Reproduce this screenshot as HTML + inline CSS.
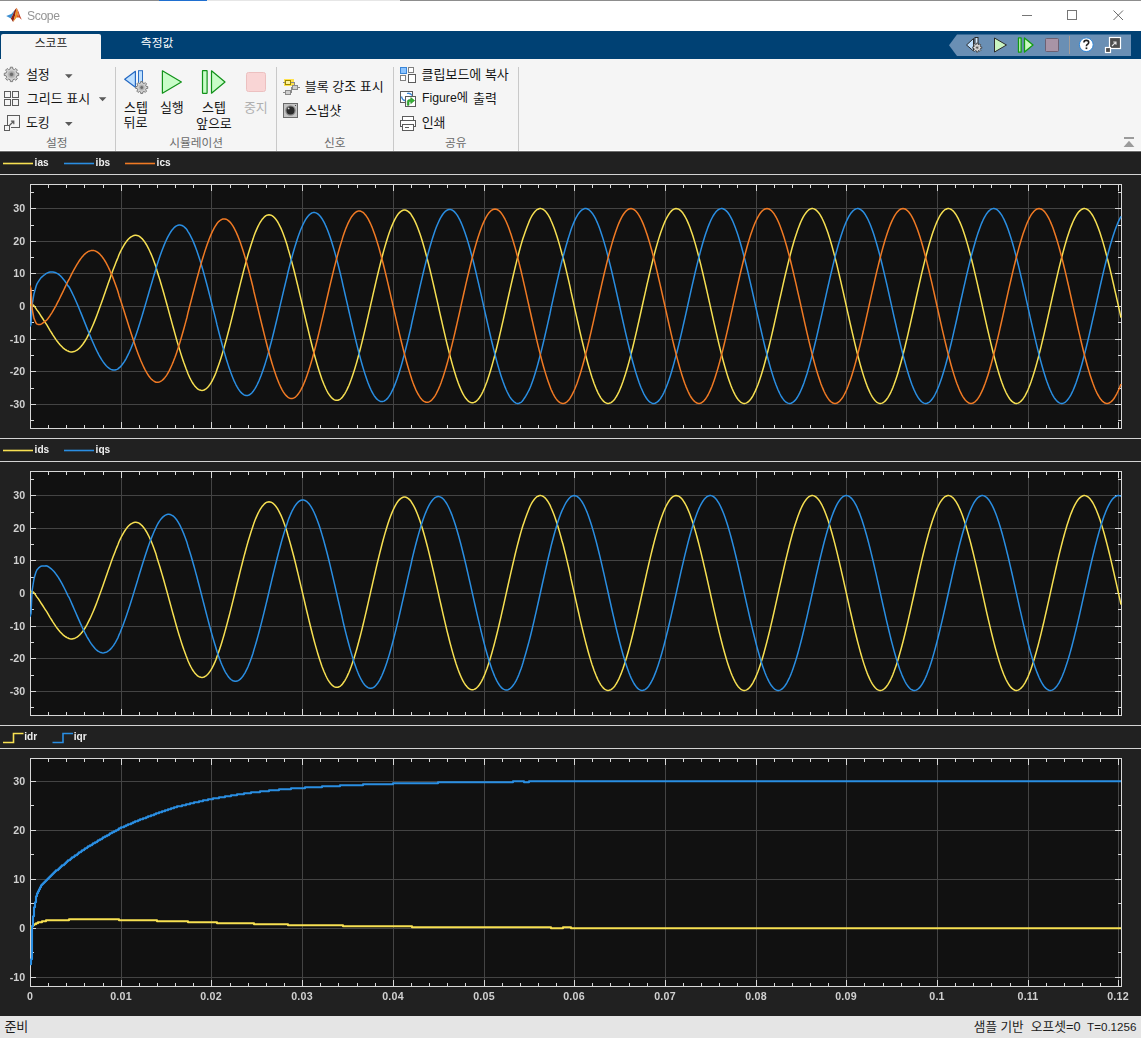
<!DOCTYPE html>
<html lang="ko"><head><meta charset="utf-8"><title>Scope</title>
<style>
html,body{margin:0;padding:0;}
body{width:1141px;height:1038px;overflow:hidden;position:relative;background:#212121;font-family:"Liberation Sans",sans-serif;}
#titlebar{position:absolute;left:0;top:0;width:1141px;height:31px;background:#fff;border-top:1px solid #8d8d8d;box-sizing:border-box;}
#titlebar .accent{position:absolute;left:159px;top:-1px;width:48px;height:1px;background:#1f6fd0;}
#title{will-change:transform;position:absolute;left:27px;top:7px;font-size:12.2px;line-height:16px;color:#959595;letter-spacing:-0.4px;}
#tabbar{position:absolute;left:0;top:31px;width:1141px;height:28px;background:#004174;}
#tab1{position:absolute;left:1px;top:3px;width:100px;height:25px;background:#f5f5f5;border-radius:2px 2px 0 0;}
#strip{position:absolute;left:0;top:59px;width:1141px;height:91px;background:#f5f5f5;border-bottom:1px solid #ffffff;}
.vsep{position:absolute;top:8px;width:1px;height:84px;background:#c9c9c9;z-index:2;}
.ko{position:absolute;display:block;white-space:nowrap;font-family:"Liberation Sans","Noto Sans CJK KR",sans-serif;}
.ic{position:absolute;display:block;overflow:visible;}
#edge{position:absolute;left:0;top:151px;width:1141px;height:1px;background:#6e6e6e;}
#status{position:absolute;left:0;top:1016px;width:1141px;height:22px;background:#e5e5e5;}
svg.plot{position:absolute;left:0;display:block;will-change:transform;}
svg.plot text{font-family:"Liberation Sans",sans-serif;font-weight:bold;font-size:10.67px;}
svg.plot text.leg{fill:#f0f0f0;font-size:10.1px;}
svg.plot text.tk{fill:#d0d0d0;}
</style></head>
<body>

<div id="titlebar"><div class="accent"></div><div class="accent" style="left:207px;width:193px;background:#e6e6e6"></div>
<svg class="ic" style="left:0;top:-1px" width="30" height="31" viewBox="0 0 30 31">
<path d="M6.2 16 L11.3 13.9 L14.6 10.2 L12.6 15.2 L10.9 18.6 Z" fill="#3d8fd1"/>
<path d="M10.9 18.6 L12.6 15.2 L14.6 10.2 L16.6 7.7 L15.2 15 L13.1 21.9 Z" fill="#8c2116"/>
<path d="M13.1 21.9 L15.2 15 L16.6 7.7 L18 12.4 L16.6 17.6 Z" fill="#ee8a1e"/>
<path d="M16.6 7.7 L18.4 11.2 L20.2 16.2 L21.8 19.8 L19.2 17.4 L18 12.4 Z" fill="#c43c1f"/>
<path d="M18 12.4 L19.2 17.4 L16.6 17.6 Z" fill="#d9551f"/>
</svg>
<div id="title">Scope</div>
<svg class="ic" style="left:1010px;top:-1px" width="131" height="31" viewBox="1010 0 131 31" shape-rendering="crispEdges">
<rect x="1022" y="15" width="10" height="1" fill="#767676"/>
<rect x="1067.5" y="10.5" width="9" height="9" fill="none" stroke="#767676" stroke-width="1"/>
<path d="M1113.5 10.5 L1123 20 M1123 10.5 L1113.5 20" stroke="#6a6a6a" stroke-width="1" fill="none" shape-rendering="geometricPrecision"/>
</svg>
</div>
<div id="tabbar"><div id="tab1"></div>
<svg class="ic" style="left:940px;top:0" width="201" height="28" viewBox="940 31 201 28">
<path d="M949 45.2 L957 34.5 H1131 V56 H957 Z" fill="#6a8fb4"/>
<!-- step back + gear -->
<path d="M966.5 45 L973.5 38.5 V51 Z" fill="#bfe0ff" stroke="#2a2a2a" stroke-width="1"/>
<rect x="975" y="37.5" width="3" height="9" fill="#d8ecff" stroke="#2a2a2a" stroke-width="1"/>
<radialGradient id="gg1"><stop offset="0" stop-color="#555555"/><stop offset="0.28" stop-color="#555555"/><stop offset="0.5" stop-color="#a6a6a6"/><stop offset="1" stop-color="#d0d0d0"/></radialGradient><path d="M981.74 46.88L981.74 48.32L980.41 48.37L980.01 49.32L980.92 50.30L979.90 51.32L978.92 50.41L977.97 50.81L977.92 52.14L976.48 52.14L976.43 50.81L975.48 50.41L974.50 51.32L973.48 50.30L974.39 49.32L973.99 48.37L972.66 48.32L972.66 46.88L973.99 46.83L974.39 45.88L973.48 44.90L974.50 43.88L975.48 44.79L976.43 44.39L976.48 43.06L977.92 43.06L977.97 44.39L978.92 44.79L979.90 43.88L980.92 44.90L980.01 45.88L980.41 46.83Z" fill="#e8e8e8" stroke="#3a3a3a" stroke-width="0.8" stroke-linejoin="round"/><circle cx="977.2" cy="47.6" r="2.3" fill="url(#gg1)"/>
<!-- play -->
<path d="M994.5 38 L1006.5 45 L994.5 52 Z" fill="#c9f4c0" stroke="#2b2b2b" stroke-width="1" stroke-linejoin="round"/>
<!-- step fwd -->
<rect x="1018.5" y="37.8" width="2.6" height="14.4" rx="0.3" fill="#c9f9c0" stroke="#129a12" stroke-width="1.3"/>
<path d="M1024.5 38 L1033 45 L1024.5 52 Z" fill="#c9f9c0" stroke="#129a12" stroke-width="1.3" stroke-linejoin="round"/>
<!-- stop -->
<rect x="1045.5" y="38.5" width="13" height="13" rx="1" fill="#a894a6" stroke="#6d6173" stroke-width="1"/>
<rect x="1069" y="36" width="1" height="18" fill="#a39c98"/>
<!-- help -->
<circle cx="1086.3" cy="44.7" r="6.9" fill="#ffffff" stroke="#2f86d6" stroke-width="1"/>
<path d="M1083.9 42.6 Q1083.9 40.4 1086.3 40.4 Q1088.7 40.4 1088.7 42.4 Q1088.7 43.6 1087.4 44.4 Q1086.4 45 1086.4 46.2" fill="none" stroke="#222" stroke-width="1.6"/>
<rect x="1085.6" y="47.4" width="1.7" height="1.7" fill="#222"/>
<!-- undock -->
<rect x="1109.5" y="37.5" width="11" height="11" fill="#4d4d4d" stroke="#ffffff" stroke-width="1.2"/>
<rect x="1105.5" y="47.5" width="5" height="5" fill="#4d4d4d" stroke="#ffffff" stroke-width="1.2"/>
<path d="M1112 46 L1115.6 42.4 M1113.2 42 H1116 V44.8" stroke="#e0e0e0" stroke-width="1.1" fill="none"/>
</svg>
<span class="ko" style="left:34.71px;top:7.41px;width:33.39px;height:10.58px;line-height:10.58px;font-size:11.8px;color:#222222">스코프</span>
<span class="ko" style="left:140.82px;top:6.45px;width:33.56px;height:12.70px;line-height:12.70px;font-size:11.8px;color:#ffffff">측정값</span>
</div>
<div id="strip">
<div class="vsep" style="left:115px"></div>
<div class="vsep" style="left:276px"></div>
<div class="vsep" style="left:393px"></div>
<div class="vsep" style="left:518px"></div>
<svg class="ic" style="left:0;top:0" width="115" height="91" viewBox="0 59 115 91">
<radialGradient id="gg2"><stop offset="0" stop-color="#6c6c6c"/><stop offset="0.28" stop-color="#6c6c6c"/><stop offset="0.5" stop-color="#a6a6a6"/><stop offset="1" stop-color="#cccccc"/></radialGradient><path d="M18.71 73.26L18.71 75.54L16.95 75.71L16.27 77.33L17.41 78.69L15.79 80.31L14.43 79.17L12.81 79.85L12.64 81.61L10.36 81.61L10.19 79.85L8.57 79.17L7.21 80.31L5.59 78.69L6.73 77.33L6.05 75.71L4.29 75.54L4.29 73.26L6.05 73.09L6.73 71.47L5.59 70.11L7.21 68.49L8.57 69.63L10.19 68.95L10.36 67.19L12.64 67.19L12.81 68.95L14.43 69.63L15.79 68.49L17.41 70.11L16.27 71.47L16.95 73.09Z" fill="#d4d4d4" stroke="#727272" stroke-width="0.9" stroke-linejoin="round"/><circle cx="11.5" cy="74.4" r="4.3" fill="url(#gg2)"/>
<g fill="none" stroke="#5c5c5c" stroke-width="1" shape-rendering="crispEdges">
<rect x="4.5" y="91.5" width="6" height="6"/><rect x="12.5" y="91.5" width="6" height="6"/>
<rect x="4.5" y="99.5" width="6" height="6"/><rect x="12.5" y="99.5" width="6" height="6"/>
</g>
<g fill="none" stroke="#5c5c5c" stroke-width="1">
<path d="M7.5 124.5 V115.5 H19.5 V127.5 H10.5" shape-rendering="crispEdges"/>
<rect x="4.5" y="125.5" width="5" height="5" shape-rendering="crispEdges"/>
<path d="M9.6 125.2 L13.5 121.5 M10.9 121.2 H13.8 V124.2" stroke-width="1.2"/>
</g>
<path d="M65 74.3 H72.6 L68.8 78.2 Z M98.8 97.3 H106.4 L102.6 101.2 Z M65 122 H72.6 L68.8 125.9 Z" fill="#5a5a5a"/>
</svg>
<span class="ko" style="left:25.91px;top:9.47px;width:23.68px;height:13.75px;line-height:13.75px;font-size:13px;color:#161616">설정</span>
<span class="ko" style="left:26.75px;top:32.91px;width:63.60px;height:13.78px;line-height:13.78px;font-size:13px;color:#161616">그리드 표시</span>
<span class="ko" style="left:25.92px;top:57.04px;width:23.66px;height:13.73px;line-height:13.73px;font-size:13px;color:#161616">도킹</span>
<span class="ko" style="left:45.94px;top:77.91px;width:21.52px;height:12.58px;line-height:12.58px;font-size:11.7px;color:#6a6a6a">설정</span>
<svg class="ic" style="left:116px;top:0" width="160" height="91" viewBox="116 59 160 91">
<path d="M124.7 79.3 L135.4 71.3 V87.3 Z" fill="#bfe0ff" stroke="#2468c2" stroke-width="1.2" stroke-linejoin="round"/>
<rect x="138.5" y="70.7" width="4" height="15" fill="#bfe0ff" stroke="#2d6fc4" stroke-width="1"/>
<radialGradient id="gg3"><stop offset="0" stop-color="#6c6c6c"/><stop offset="0.28" stop-color="#6c6c6c"/><stop offset="0.5" stop-color="#a6a6a6"/><stop offset="1" stop-color="#cccccc"/></radialGradient><path d="M147.72 86.55L147.72 88.45L146.17 88.57L145.62 89.90L146.64 91.09L145.29 92.44L144.10 91.42L142.77 91.97L142.65 93.52L140.75 93.52L140.63 91.97L139.30 91.42L138.11 92.44L136.76 91.09L137.78 89.90L137.23 88.57L135.68 88.45L135.68 86.55L137.23 86.43L137.78 85.10L136.76 83.91L138.11 82.56L139.30 83.58L140.63 83.03L140.75 81.48L142.65 81.48L142.77 83.03L144.10 83.58L145.29 82.56L146.64 83.91L145.62 85.10L146.17 86.43Z" fill="#d4d4d4" stroke="#727272" stroke-width="0.9" stroke-linejoin="round"/><circle cx="141.7" cy="87.5" r="3.4" fill="url(#gg3)"/>
<path d="M162.4 70.8 L181.4 82 L162.4 93.2 Z" fill="#c8fdc8" stroke="#12921a" stroke-width="1.2" stroke-linejoin="round"/>
<rect x="202.5" y="70.7" width="4.6" height="22.6" rx="0.2" fill="#c8fdc8" stroke="#12921a" stroke-width="1.2"/>
<path d="M211.5 70.8 L225 82 L211.5 93.2 Z" fill="#c8fdc8" stroke="#12921a" stroke-width="1.2" stroke-linejoin="round"/>
<rect x="246.5" y="72.5" width="19" height="19" rx="2" fill="#f9d5d5" stroke="#ecc0c0" stroke-width="1"/>
</svg>
<span class="ko" style="left:124.02px;top:41.65px;width:23.87px;height:13.61px;line-height:13.61px;font-size:13px;color:#161616">스텝</span>
<span class="ko" style="left:123.61px;top:57.47px;width:24.67px;height:13.75px;line-height:13.75px;font-size:13px;color:#161616">뒤로</span>
<span class="ko" style="left:159.92px;top:41.63px;width:23.85px;height:13.74px;line-height:13.74px;font-size:13px;color:#161616">실행</span>
<span class="ko" style="left:202.07px;top:41.65px;width:23.87px;height:13.61px;line-height:13.61px;font-size:13px;color:#161616">스텝</span>
<span class="ko" style="left:195.96px;top:57.57px;width:36.37px;height:13.57px;line-height:13.57px;font-size:13px;color:#161616">앞으로</span>
<span class="ko" style="left:243.91px;top:41.62px;width:23.58px;height:13.76px;line-height:13.76px;font-size:13px;color:#b0b0b0">중지</span>
<span class="ko" style="left:169.27px;top:77.65px;width:54.06px;height:12.60px;line-height:12.60px;font-size:11.7px;color:#6a6a6a">시뮬레이션</span>
<svg class="ic" style="left:277px;top:0" width="116" height="91" viewBox="277 59 116 91">
<g shape-rendering="crispEdges">
<rect x="284" y="79" width="10" height="7" fill="#ffe14d"/>
<rect x="285.5" y="80.5" width="5" height="4" fill="#fff3a0" stroke="#9a8600" stroke-width="1"/>
<rect x="292.5" y="85.5" width="5" height="4" fill="#cfcfcf" stroke="#8a8a8a" stroke-width="1"/>
<rect x="285.5" y="90.5" width="5" height="4" fill="#cfcfcf" stroke="#8a8a8a" stroke-width="1"/>
<path d="M283 82.5 H285 M291 82.5 H294.5 V85 M298 87.5 H299.5 M292 87.5 H291.5 V92.5 H291 M283 92.5 H285" fill="none" stroke="#8a8a8a" stroke-width="1"/>
</g>
<rect x="283.5" y="103.5" width="14" height="14" fill="#c4c4c4" stroke="#6a6a6a" stroke-width="1"/>
<circle cx="290.5" cy="110.5" r="5.3" fill="#8c8c8c"/>
<circle cx="290.5" cy="110.5" r="4" fill="#2b2b2b"/>
<circle cx="288.6" cy="108.4" r="0.9" fill="#dcdcdc"/>
<rect x="295" y="105" width="1" height="1" fill="#444"/>
</svg>
<span class="ko" style="left:304.80px;top:20.51px;width:79.80px;height:13.78px;line-height:13.78px;font-size:13px;color:#161616">블록 강조 표시</span>
<span class="ko" style="left:305.28px;top:44.64px;width:36.75px;height:13.71px;line-height:13.71px;font-size:13px;color:#161616">스냅샷</span>
<span class="ko" style="left:323.92px;top:77.68px;width:22.25px;height:12.34px;line-height:12.34px;font-size:11.7px;color:#6a6a6a">신호</span>
<svg class="ic" style="left:394px;top:0" width="124" height="91" viewBox="394 59 124 91">
<g shape-rendering="crispEdges" stroke="#5c5c5c" stroke-width="1">
<rect x="400.5" y="67.5" width="6" height="6" fill="#8cc4ff" stroke="#3a86d8"/>
<rect x="408.5" y="67.5" width="5" height="5" fill="#fff" stroke="#808080"/>
<rect x="400.5" y="75.5" width="5" height="5" fill="#fff" stroke="#808080"/>
<rect x="408.5" y="74.5" width="7" height="8" fill="#fff"/>
<rect x="400.5" y="91.5" width="12" height="11" fill="#fff"/>
<rect x="405.5" y="96.5" width="10" height="10" fill="#fff"/>
<path d="M402.5 116.500 H413.5 V120.5 H402.500 Z" fill="#fff"/>
<path d="M400.5 120.5 H415.5 V126.5 H400.500 Z" fill="#fff"/>
<path d="M402.5 124.5 H413.5 V130.5 H402.500 Z" fill="#fff"/>
<path d="M404.500 127.5 H408.500" fill="none"/>
</g>
<path d="M401.5 96.5 Q402.5 100.5 405 100.5 M407 93.5 Q410.5 92.5 412 95.5" fill="none" stroke="#3a86d8" stroke-width="1.3"/>
<path d="M407.3 105.3 V101.3 Q407.5 99.6 409.8 99.6 H410.8 V97.6 L414.6 100.6 L410.8 103.6 V101.6 H409.6 Q409 101.7 409 102.5 V105.3 Z" fill="#35b535" stroke="#1c7f1c" stroke-width="0.6"/>
</svg>
<span class="ko" style="left:421.50px;top:9.02px;width:89.45px;height:13.76px;line-height:13.76px;font-size:13px;color:#161616">클립보드에 복사</span>
<span class="ko" style="left:421.90px;top:32.03px;width:46.60px;height:15.13px;line-height:15.13px;font-size:12.3px;color:#161616">Figure에</span>
<span class="ko" style="left:473.04px;top:32.73px;width:23.62px;height:13.84px;line-height:13.84px;font-size:13px;color:#161616">출력</span>
<span class="ko" style="left:421.66px;top:57.02px;width:23.58px;height:13.76px;line-height:13.76px;font-size:13px;color:#161616">인쇄</span>
<span class="ko" style="left:445.08px;top:77.79px;width:22.33px;height:12.17px;line-height:12.17px;font-size:11.7px;color:#6a6a6a">공유</span>
<svg class="ic" style="left:1120px;top:75px" width="18" height="16" viewBox="1120 134 18 16">
<rect x="1124" y="137" width="10" height="2" fill="#9b9b9b"/><path d="M1123.6 147 L1129 140.8 L1134.4 147 Z" fill="#9b9b9b"/></svg>
</div>
<div id="edge"></div>
<svg class="plot" style="top:151px" width="1141" height="287" viewBox="0 151 1141 287">
<rect x="0" y="174" width="1141" height="1" fill="#d4d4d4"/>
<rect x="30" y="184" width="1092" height="245" fill="#111111"/>
<g shape-rendering="crispEdges" fill="#444444">
<rect x="121" y="184" width="1" height="244"/>
<rect x="211" y="184" width="1" height="244"/>
<rect x="302" y="184" width="1" height="244"/>
<rect x="393" y="184" width="1" height="244"/>
<rect x="484" y="184" width="1" height="244"/>
<rect x="574" y="184" width="1" height="244"/>
<rect x="665" y="184" width="1" height="244"/>
<rect x="756" y="184" width="1" height="244"/>
<rect x="846" y="184" width="1" height="244"/>
<rect x="937" y="184" width="1" height="244"/>
<rect x="1028" y="184" width="1" height="244"/>
<rect x="1118" y="184" width="1" height="244"/>
<rect x="30" y="404" width="1091" height="1"/>
<rect x="30" y="371" width="1091" height="1"/>
<rect x="30" y="339" width="1091" height="1"/>
<rect x="30" y="306" width="1091" height="1"/>
<rect x="30" y="273" width="1091" height="1"/>
<rect x="30" y="241" width="1091" height="1"/>
<rect x="30" y="208" width="1091" height="1"/>
</g>
<g shape-rendering="crispEdges" fill="#d8d8d8">
<rect x="30" y="184" width="1092" height="1"/>
<rect x="30" y="428" width="1092" height="1"/>
<rect x="30" y="184" width="1" height="245"/>
<rect x="1121" y="184" width="1" height="245"/>
<rect x="30" y="404" width="6" height="1"/>
<rect x="1115" y="404" width="7" height="1"/>
<rect x="30" y="371" width="6" height="1"/>
<rect x="1115" y="371" width="7" height="1"/>
<rect x="30" y="339" width="6" height="1"/>
<rect x="1115" y="339" width="7" height="1"/>
<rect x="30" y="306" width="6" height="1"/>
<rect x="1115" y="306" width="7" height="1"/>
<rect x="30" y="273" width="6" height="1"/>
<rect x="1115" y="273" width="7" height="1"/>
<rect x="30" y="241" width="6" height="1"/>
<rect x="1115" y="241" width="7" height="1"/>
<rect x="30" y="208" width="6" height="1"/>
<rect x="1115" y="208" width="7" height="1"/>
<rect x="30" y="420" width="4" height="1"/>
<rect x="1118" y="420" width="4" height="1"/>
<rect x="30" y="388" width="4" height="1"/>
<rect x="1118" y="388" width="4" height="1"/>
<rect x="30" y="355" width="4" height="1"/>
<rect x="1118" y="355" width="4" height="1"/>
<rect x="30" y="322" width="4" height="1"/>
<rect x="1118" y="322" width="4" height="1"/>
<rect x="30" y="290" width="4" height="1"/>
<rect x="1118" y="290" width="4" height="1"/>
<rect x="30" y="257" width="4" height="1"/>
<rect x="1118" y="257" width="4" height="1"/>
<rect x="30" y="225" width="4" height="1"/>
<rect x="1118" y="225" width="4" height="1"/>
<rect x="30" y="192" width="4" height="1"/>
<rect x="1118" y="192" width="4" height="1"/>
<rect x="30" y="184" width="1" height="7"/>
<rect x="30" y="422" width="1" height="7"/>
<rect x="48" y="184" width="1" height="4"/>
<rect x="48" y="425" width="1" height="4"/>
<rect x="66" y="184" width="1" height="4"/>
<rect x="66" y="425" width="1" height="4"/>
<rect x="84" y="184" width="1" height="4"/>
<rect x="84" y="425" width="1" height="4"/>
<rect x="103" y="184" width="1" height="4"/>
<rect x="103" y="425" width="1" height="4"/>
<rect x="121" y="184" width="1" height="7"/>
<rect x="121" y="422" width="1" height="7"/>
<rect x="139" y="184" width="1" height="4"/>
<rect x="139" y="425" width="1" height="4"/>
<rect x="157" y="184" width="1" height="4"/>
<rect x="157" y="425" width="1" height="4"/>
<rect x="175" y="184" width="1" height="4"/>
<rect x="175" y="425" width="1" height="4"/>
<rect x="193" y="184" width="1" height="4"/>
<rect x="193" y="425" width="1" height="4"/>
<rect x="211" y="184" width="1" height="7"/>
<rect x="211" y="422" width="1" height="7"/>
<rect x="230" y="184" width="1" height="4"/>
<rect x="230" y="425" width="1" height="4"/>
<rect x="248" y="184" width="1" height="4"/>
<rect x="248" y="425" width="1" height="4"/>
<rect x="266" y="184" width="1" height="4"/>
<rect x="266" y="425" width="1" height="4"/>
<rect x="284" y="184" width="1" height="4"/>
<rect x="284" y="425" width="1" height="4"/>
<rect x="302" y="184" width="1" height="7"/>
<rect x="302" y="422" width="1" height="7"/>
<rect x="320" y="184" width="1" height="4"/>
<rect x="320" y="425" width="1" height="4"/>
<rect x="338" y="184" width="1" height="4"/>
<rect x="338" y="425" width="1" height="4"/>
<rect x="357" y="184" width="1" height="4"/>
<rect x="357" y="425" width="1" height="4"/>
<rect x="375" y="184" width="1" height="4"/>
<rect x="375" y="425" width="1" height="4"/>
<rect x="393" y="184" width="1" height="7"/>
<rect x="393" y="422" width="1" height="7"/>
<rect x="411" y="184" width="1" height="4"/>
<rect x="411" y="425" width="1" height="4"/>
<rect x="429" y="184" width="1" height="4"/>
<rect x="429" y="425" width="1" height="4"/>
<rect x="447" y="184" width="1" height="4"/>
<rect x="447" y="425" width="1" height="4"/>
<rect x="465" y="184" width="1" height="4"/>
<rect x="465" y="425" width="1" height="4"/>
<rect x="484" y="184" width="1" height="7"/>
<rect x="484" y="422" width="1" height="7"/>
<rect x="502" y="184" width="1" height="4"/>
<rect x="502" y="425" width="1" height="4"/>
<rect x="520" y="184" width="1" height="4"/>
<rect x="520" y="425" width="1" height="4"/>
<rect x="538" y="184" width="1" height="4"/>
<rect x="538" y="425" width="1" height="4"/>
<rect x="556" y="184" width="1" height="4"/>
<rect x="556" y="425" width="1" height="4"/>
<rect x="574" y="184" width="1" height="7"/>
<rect x="574" y="422" width="1" height="7"/>
<rect x="592" y="184" width="1" height="4"/>
<rect x="592" y="425" width="1" height="4"/>
<rect x="610" y="184" width="1" height="4"/>
<rect x="610" y="425" width="1" height="4"/>
<rect x="629" y="184" width="1" height="4"/>
<rect x="629" y="425" width="1" height="4"/>
<rect x="647" y="184" width="1" height="4"/>
<rect x="647" y="425" width="1" height="4"/>
<rect x="665" y="184" width="1" height="7"/>
<rect x="665" y="422" width="1" height="7"/>
<rect x="683" y="184" width="1" height="4"/>
<rect x="683" y="425" width="1" height="4"/>
<rect x="701" y="184" width="1" height="4"/>
<rect x="701" y="425" width="1" height="4"/>
<rect x="719" y="184" width="1" height="4"/>
<rect x="719" y="425" width="1" height="4"/>
<rect x="737" y="184" width="1" height="4"/>
<rect x="737" y="425" width="1" height="4"/>
<rect x="756" y="184" width="1" height="7"/>
<rect x="756" y="422" width="1" height="7"/>
<rect x="774" y="184" width="1" height="4"/>
<rect x="774" y="425" width="1" height="4"/>
<rect x="792" y="184" width="1" height="4"/>
<rect x="792" y="425" width="1" height="4"/>
<rect x="810" y="184" width="1" height="4"/>
<rect x="810" y="425" width="1" height="4"/>
<rect x="828" y="184" width="1" height="4"/>
<rect x="828" y="425" width="1" height="4"/>
<rect x="846" y="184" width="1" height="7"/>
<rect x="846" y="422" width="1" height="7"/>
<rect x="864" y="184" width="1" height="4"/>
<rect x="864" y="425" width="1" height="4"/>
<rect x="883" y="184" width="1" height="4"/>
<rect x="883" y="425" width="1" height="4"/>
<rect x="901" y="184" width="1" height="4"/>
<rect x="901" y="425" width="1" height="4"/>
<rect x="919" y="184" width="1" height="4"/>
<rect x="919" y="425" width="1" height="4"/>
<rect x="937" y="184" width="1" height="7"/>
<rect x="937" y="422" width="1" height="7"/>
<rect x="955" y="184" width="1" height="4"/>
<rect x="955" y="425" width="1" height="4"/>
<rect x="973" y="184" width="1" height="4"/>
<rect x="973" y="425" width="1" height="4"/>
<rect x="991" y="184" width="1" height="4"/>
<rect x="991" y="425" width="1" height="4"/>
<rect x="1010" y="184" width="1" height="4"/>
<rect x="1010" y="425" width="1" height="4"/>
<rect x="1028" y="184" width="1" height="7"/>
<rect x="1028" y="422" width="1" height="7"/>
<rect x="1046" y="184" width="1" height="4"/>
<rect x="1046" y="425" width="1" height="4"/>
<rect x="1064" y="184" width="1" height="4"/>
<rect x="1064" y="425" width="1" height="4"/>
<rect x="1082" y="184" width="1" height="4"/>
<rect x="1082" y="425" width="1" height="4"/>
<rect x="1100" y="184" width="1" height="4"/>
<rect x="1100" y="425" width="1" height="4"/>
<rect x="1118" y="184" width="1" height="7"/>
<rect x="1118" y="422" width="1" height="7"/>
</g>
<clipPath id="cp0"><rect x="30" y="184" width="1092" height="245"/></clipPath>
<g clip-path="url(#cp0)" fill="none" stroke-linejoin="round" stroke-linecap="butt">
<path stroke="#f7e052" stroke-width="1.5" d="M30.0 306.0L31.0 304.3L32.0 304.7L33.0 304.9L34.0 305.9L35.0 307.1L36.0 308.6L37.0 310.1L38.0 311.4L39.0 312.8L40.0 314.4L41.0 316.0L42.0 317.5L43.0 319.0L44.0 320.6L45.0 322.2L46.0 323.6L47.0 325.2L48.0 326.9L49.0 328.6L50.0 330.3L51.0 331.9L52.0 333.5L53.0 335.1L54.0 336.6L55.0 338.1L56.0 339.6L57.0 341.0L58.0 342.3L59.0 343.6L60.0 344.8L61.0 345.8L62.0 346.8L63.0 347.8L64.0 348.6L65.0 349.4L66.0 350.0L67.0 350.6L68.0 351.0L69.0 351.5L70.0 351.8L71.0 352.0L72.0 352.0L73.0 351.8L74.0 351.6L75.0 351.2L76.0 350.7L77.0 350.1L78.0 349.4L79.0 348.5L80.0 347.6L81.0 346.5L82.0 345.3L83.0 344.0L84.0 342.5L85.0 341.0L86.0 339.3L87.0 337.6L88.0 335.7L89.0 333.7L90.0 331.7L91.0 329.5L92.0 327.3L93.0 325.0L94.0 322.6L95.0 320.1L96.0 317.6L97.0 315.0L98.0 312.3L99.0 309.6L100.0 306.8L101.0 304.1L102.0 301.2L103.0 298.4L104.0 295.5L105.0 292.7L106.0 289.8L107.0 286.9L108.0 284.1L109.0 281.2L110.0 278.4L111.0 275.6L112.0 272.8L113.0 270.1L114.0 267.5L115.0 264.9L116.0 262.3L117.0 259.9L118.0 257.5L119.0 254.8L120.0 252.6L121.0 250.5L122.0 248.6L123.0 246.8L124.0 245.1L125.0 243.5L126.0 242.1L127.0 240.8L128.0 239.6L129.0 238.5L130.0 237.6L131.0 236.9L132.0 236.3L133.0 235.8L134.0 235.5L135.0 235.3L136.0 235.3L137.0 235.4L138.0 235.7L139.0 236.2L140.0 236.9L141.0 237.7L142.0 238.6L143.0 239.8L144.0 241.0L145.0 242.4L146.0 244.0L147.0 245.7L148.0 247.6L149.0 249.5L150.0 251.7L151.0 253.9L152.0 256.3L153.0 258.8L154.0 261.5L155.0 264.2L156.0 267.1L157.0 270.8L158.0 273.9L159.0 277.1L160.0 280.3L161.0 283.7L162.0 287.1L163.0 290.5L164.0 294.0L165.0 297.6L166.0 301.2L167.0 304.8L168.0 308.4L169.0 312.1L170.0 315.8L171.0 319.4L172.0 323.1L173.0 326.7L174.0 330.3L175.0 333.9L176.0 337.5L177.0 341.0L178.0 344.4L179.0 347.7L180.0 350.9L181.0 354.1L182.0 357.2L183.0 360.2L184.0 363.1L185.0 365.8L186.0 368.5L187.0 371.0L188.0 373.8L189.0 376.0L190.0 378.1L191.0 380.0L192.0 381.8L193.0 383.5L194.0 384.9L195.0 386.2L196.0 387.3L197.0 388.3L198.0 389.1L199.0 389.7L200.0 390.1L201.0 390.3L202.0 390.4L203.0 390.3L204.0 390.0L205.0 389.5L206.0 388.8L207.0 388.0L208.0 387.0L209.0 385.8L210.0 384.4L211.0 382.9L212.0 381.1L213.0 379.2L214.0 377.1L215.0 374.9L216.0 372.5L217.0 369.5L218.0 366.8L219.0 364.0L220.0 361.0L221.0 357.9L222.0 354.7L223.0 351.4L224.0 348.0L225.0 344.4L226.0 340.8L227.0 337.1L228.0 333.3L229.0 329.5L230.0 325.6L231.0 321.6L232.0 317.6L233.0 313.6L234.0 309.6L235.0 305.5L236.0 301.4L237.0 297.3L238.0 293.2L239.0 289.2L240.0 285.1L241.0 281.1L242.0 277.2L243.0 273.3L244.0 269.4L245.0 265.7L246.0 262.0L247.0 258.4L248.0 254.8L249.0 251.5L250.0 248.2L251.0 245.0L252.0 242.0L253.0 239.1L254.0 235.9L255.0 233.3L256.0 230.9L257.0 228.6L258.0 226.4L259.0 224.5L260.0 222.7L261.0 221.1L262.0 219.6L263.0 218.4L264.0 217.3L265.0 216.4L266.0 215.7L267.0 215.2L268.0 214.9L269.0 214.8L270.0 214.9L271.0 215.2L272.0 215.7L273.0 216.3L274.0 217.2L275.0 218.3L276.0 219.5L277.0 220.9L278.0 222.5L279.0 224.3L280.0 226.3L281.0 228.4L282.0 230.8L283.0 233.2L284.0 235.9L285.0 238.7L286.0 241.7L287.0 244.7L288.0 248.5L289.0 251.9L290.0 255.4L291.0 259.0L292.0 262.7L293.0 266.5L294.0 270.3L295.0 274.3L296.0 278.4L297.0 282.5L298.0 286.6L299.0 290.8L300.0 295.1L301.0 299.3L302.0 303.6L303.0 307.9L304.0 312.2L305.0 316.5L306.0 320.8L307.0 325.0L308.0 329.2L309.0 333.4L310.0 337.5L311.0 341.5L312.0 345.5L313.0 349.4L314.0 353.2L315.0 356.9L316.0 360.4L317.0 363.9L318.0 367.3L319.0 370.5L320.0 373.6L321.0 376.6L322.0 379.4L323.0 382.0L324.0 384.5L325.0 386.8L326.0 389.0L327.0 391.0L328.0 392.8L329.0 394.4L330.0 395.8L331.0 397.0L332.0 398.1L333.0 398.9L334.0 399.6L335.0 400.0L336.0 400.3L337.0 400.3L338.0 400.2L339.0 399.8L340.0 399.3L341.0 398.5L342.0 397.6L343.0 396.2L344.0 394.8L345.0 393.3L346.0 391.5L347.0 389.6L348.0 387.4L349.0 385.2L350.0 382.7L351.0 380.1L352.0 377.3L353.0 374.3L354.0 371.2L355.0 368.0L356.0 364.6L357.0 361.2L358.0 357.5L359.0 353.8L360.0 350.0L361.0 346.1L362.0 342.1L363.0 338.0L364.0 333.8L365.0 329.6L366.0 325.3L367.0 321.0L368.0 316.6L369.0 312.2L370.0 307.8L371.0 303.4L372.0 299.1L373.0 294.7L374.0 290.3L375.0 286.0L376.0 281.7L377.0 277.4L378.0 273.3L379.0 269.1L380.0 265.1L381.0 261.2L382.0 257.3L383.0 253.5L384.0 249.9L385.0 246.4L386.0 243.0L387.0 239.7L388.0 236.6L389.0 233.6L390.0 230.8L391.0 228.1L392.0 225.6L393.0 223.3L394.0 221.1L395.0 219.1L396.0 217.3L397.0 215.7L398.0 214.3L399.0 213.1L400.0 212.1L401.0 211.3L402.0 210.7L403.0 210.3L404.0 210.1L405.0 210.1L406.0 210.3L407.0 210.7L408.0 211.3L409.0 212.1L410.0 213.1L411.0 214.3L412.0 216.0L413.0 217.6L414.0 219.4L415.0 221.4L416.0 223.6L417.0 226.0L418.0 228.5L419.0 231.2L420.0 234.1L421.0 237.1L422.0 240.2L423.0 243.5L424.0 247.0L425.0 250.5L426.0 254.2L427.0 258.0L428.0 261.9L429.0 265.9L430.0 270.0L431.0 274.2L432.0 278.4L433.0 282.7L434.0 287.0L435.0 291.4L436.0 295.8L437.0 300.2L438.0 304.7L439.0 309.1L440.0 313.6L441.0 318.0L442.0 322.4L443.0 326.8L444.0 331.1L445.0 335.4L446.0 339.6L447.0 343.8L448.0 347.8L449.0 351.8L450.0 355.7L451.0 359.4L452.0 363.1L453.0 366.6L454.0 370.1L455.0 373.3L456.0 376.5L457.0 379.4L458.0 382.3L459.0 384.9L460.0 387.4L461.0 389.7L462.0 391.9L463.0 393.9L464.0 395.6L465.0 397.2L466.0 398.6L467.0 399.8L468.0 400.8L469.0 401.6L470.0 402.2L471.0 402.5L472.0 402.7L473.0 402.7L474.0 402.4L475.0 402.0L476.0 401.4L477.0 400.5L478.0 399.5L479.0 398.2L480.0 396.8L481.0 395.1L482.0 393.3L483.0 391.3L484.0 389.1L485.0 386.7L486.0 384.1L487.0 381.4L488.0 378.5L489.0 375.5L490.0 372.3L491.0 369.0L492.0 365.5L493.0 361.9L494.0 358.2L495.0 354.4L496.0 350.5L497.0 346.5L498.0 342.3L499.0 338.2L500.0 333.9L501.0 329.6L502.0 325.2L503.0 320.8L504.0 316.4L505.0 311.9L506.0 307.4L507.0 303.0L508.0 298.5L509.0 294.0L510.0 289.6L511.0 285.2L512.0 280.8L513.0 276.5L514.0 272.3L515.0 268.0L516.0 263.9L517.0 259.9L518.0 256.0L519.0 252.2L520.0 248.5L521.0 244.9L522.0 241.5L523.0 238.3L524.0 235.4L525.0 232.5L526.0 229.7L527.0 227.0L528.0 224.5L529.0 221.9L530.0 219.5L531.0 217.5L532.0 215.7L533.0 214.1L534.0 212.7L535.0 211.5L536.0 210.5L537.0 209.7L538.0 209.2L539.0 208.8L540.0 208.6L541.0 208.6L542.0 208.9L543.0 209.3L544.0 210.0L545.0 210.8L546.0 211.9L547.0 213.2L548.0 214.6L549.0 216.3L550.0 218.1L551.0 220.5L552.0 222.7L553.0 225.2L554.0 227.7L555.0 230.5L556.0 233.4L557.0 236.5L558.0 239.7L559.0 243.1L560.0 246.6L561.0 250.2L562.0 254.0L563.0 257.3L564.0 261.2L565.0 265.3L566.0 269.4L567.0 273.6L568.0 277.9L569.0 282.2L570.0 286.6L571.0 291.7L572.0 296.1L573.0 300.6L574.0 305.1L575.0 309.6L576.0 314.1L577.0 318.6L578.0 323.0L579.0 327.4L580.0 331.8L581.0 336.1L582.0 340.3L583.0 344.5L584.0 348.6L585.0 352.6L586.0 356.5L587.0 360.3L588.0 364.0L589.0 367.5L590.0 370.9L591.0 374.2L592.0 377.4L593.0 380.3L594.0 383.2L595.0 385.8L596.0 388.3L597.0 390.6L598.0 392.8L599.0 394.7L600.0 396.5L601.0 398.1L602.0 399.4L603.0 400.6L604.0 401.6L605.0 402.3L606.0 402.9L607.0 403.3L608.0 403.4L609.0 403.3L610.0 403.1L611.0 402.6L612.0 401.9L613.0 401.0L614.0 400.0L615.0 398.7L616.0 397.2L617.0 395.5L618.0 393.6L619.0 391.6L620.0 389.3L621.0 386.9L622.0 384.3L623.0 381.6L624.0 378.6L625.0 375.6L626.0 372.3L627.0 369.0L628.0 365.5L629.0 361.9L630.0 358.1L631.0 354.3L632.0 350.3L633.0 346.3L634.0 342.1L635.0 337.9L636.0 333.6L637.0 329.3L638.0 324.9L639.0 320.5L640.0 316.0L641.0 311.5L642.0 307.0L643.0 302.5L644.0 298.0L645.0 293.6L646.0 289.1L647.0 284.7L648.0 280.3L649.0 276.0L650.0 271.8L651.0 267.6L652.0 263.5L653.0 259.5L654.0 255.6L655.0 251.8L656.0 248.1L657.0 244.6L658.0 241.1L659.0 237.9L660.0 234.7L661.0 231.7L662.0 228.9L663.0 226.2L664.0 223.7L665.0 221.4L666.0 219.3L667.0 217.3L668.0 215.6L669.0 214.0L670.0 212.6L671.0 211.4L672.0 210.4L673.0 209.7L674.0 209.1L675.0 208.7L676.0 208.6L677.0 208.7L678.0 208.9L679.0 209.4L680.0 210.1L681.0 210.9L682.0 212.0L683.0 213.3L684.0 214.8L685.0 216.5L686.0 218.3L687.0 220.4L688.0 222.6L689.0 225.0L690.0 227.6L691.0 230.4L692.0 233.3L693.0 236.3L694.0 239.6L695.0 242.9L696.0 246.4L697.0 250.0L698.0 253.8L699.0 257.6L700.0 261.6L701.0 265.6L702.0 269.8L703.0 274.0L704.0 278.3L705.0 282.6L706.0 287.0L707.0 291.4L708.0 295.9L709.0 300.4L710.0 304.9L711.0 309.4L712.0 313.9L713.0 318.3L714.0 322.8L715.0 327.2L716.0 331.6L717.0 335.9L718.0 340.1L719.0 344.3L720.0 348.4L721.0 352.4L722.0 356.3L723.0 360.1L724.0 363.8L725.0 367.3L726.0 370.8L727.0 374.1L728.0 377.2L729.0 380.2L730.0 383.0L731.0 385.7L732.0 388.2L733.0 390.5L734.0 392.7L735.0 394.6L736.0 396.4L737.0 398.0L738.0 399.4L739.0 400.5L740.0 401.5L741.0 402.3L742.0 402.9L743.0 403.2L744.0 403.4L745.0 403.4L746.0 403.1L747.0 402.6L748.0 402.0L749.0 401.1L750.0 400.0L751.0 398.7L752.0 397.3L753.0 395.6L754.0 393.7L755.0 391.7L756.0 389.4L757.0 387.0L758.0 384.5L759.0 381.7L760.0 378.8L761.0 375.7L762.0 372.5L763.0 369.2L764.0 365.7L765.0 362.0L766.0 358.3L767.0 354.5L768.0 350.5L769.0 346.5L770.0 342.3L771.0 338.1L772.0 333.8L773.0 329.5L774.0 325.1L775.0 320.7L776.0 316.2L777.0 311.7L778.0 307.2L779.0 302.7L780.0 298.2L781.0 293.8L782.0 289.3L783.0 284.9L784.0 280.5L785.0 276.2L786.0 272.0L787.0 267.8L788.0 263.7L789.0 259.7L790.0 255.8L791.0 252.0L792.0 248.3L793.0 244.7L794.0 241.3L795.0 238.0L796.0 234.9L797.0 231.9L798.0 229.0L799.0 226.4L800.0 223.9L801.0 221.5L802.0 219.4L803.0 217.4L804.0 215.6L805.0 214.1L806.0 212.7L807.0 211.5L808.0 210.5L809.0 209.7L810.0 209.1L811.0 208.8L812.0 208.6L813.0 208.6L814.0 208.9L815.0 209.4L816.0 210.0L817.0 210.9L818.0 212.0L819.0 213.2L820.0 214.7L821.0 216.4L822.0 218.2L823.0 220.3L824.0 222.5L825.0 224.9L826.0 227.5L827.0 230.2L828.0 233.1L829.0 236.2L830.0 239.4L831.0 242.8L832.0 246.2L833.0 249.9L834.0 253.6L835.0 257.4L836.0 261.4L837.0 265.4L838.0 269.6L839.0 273.8L840.0 278.1L841.0 282.4L842.0 286.8L843.0 291.2L844.0 295.7L845.0 300.2L846.0 304.7L847.0 309.1L848.0 313.6L849.0 318.1L850.0 322.6L851.0 327.0L852.0 331.3L853.0 335.7L854.0 339.9L855.0 344.1L856.0 348.2L857.0 352.2L858.0 356.1L859.0 359.9L860.0 363.6L861.0 367.2L862.0 370.6L863.0 373.9L864.0 377.1L865.0 380.1L866.0 382.9L867.0 385.6L868.0 388.1L869.0 390.4L870.0 392.6L871.0 394.5L872.0 396.3L873.0 397.9L874.0 399.3L875.0 400.5L876.0 401.5L877.0 402.3L878.0 402.9L879.0 403.2L880.0 403.4L881.0 403.4L882.0 403.1L883.0 402.7L884.0 402.0L885.0 401.1L886.0 400.1L887.0 398.8L888.0 397.3L889.0 395.7L890.0 393.8L891.0 391.8L892.0 389.6L893.0 387.2L894.0 384.6L895.0 381.8L896.0 378.9L897.0 375.9L898.0 372.7L899.0 369.3L900.0 365.8L901.0 362.2L902.0 358.5L903.0 354.7L904.0 350.7L905.0 346.7L906.0 342.5L907.0 338.3L908.0 334.1L909.0 329.7L910.0 325.3L911.0 320.9L912.0 316.4L913.0 312.0L914.0 307.5L915.0 303.0L916.0 298.5L917.0 294.0L918.0 289.5L919.0 285.1L920.0 280.8L921.0 276.4L922.0 272.2L923.0 268.0L924.0 263.9L925.0 259.9L926.0 256.0L927.0 252.2L928.0 248.5L929.0 244.9L930.0 241.5L931.0 238.2L932.0 235.0L933.0 232.0L934.0 229.2L935.0 226.5L936.0 224.0L937.0 221.6L938.0 219.5L939.0 217.5L940.0 215.7L941.0 214.1L942.0 212.7L943.0 211.5L944.0 210.5L945.0 209.7L946.0 209.2L947.0 208.8L948.0 208.6L949.0 208.6L950.0 208.9L951.0 209.3L952.0 210.0L953.0 210.8L954.0 211.9L955.0 213.2L956.0 214.6L957.0 216.3L958.0 218.1L959.0 220.2L960.0 222.4L961.0 224.8L962.0 227.3L963.0 230.1L964.0 233.0L965.0 236.0L966.0 239.2L967.0 242.6L968.0 246.1L969.0 249.7L970.0 253.4L971.0 257.2L972.0 261.2L973.0 265.2L974.0 269.4L975.0 273.6L976.0 277.8L977.0 282.2L978.0 286.6L979.0 291.0L980.0 295.4L981.0 299.9L982.0 304.4L983.0 308.9L984.0 313.4L985.0 317.9L986.0 322.3L987.0 326.8L988.0 331.1L989.0 335.4L990.0 339.7L991.0 343.9L992.0 348.0L993.0 352.0L994.0 355.9L995.0 359.7L996.0 363.4L997.0 367.0L998.0 370.4L999.0 373.7L1000.0 376.9L1001.0 379.9L1002.0 382.8L1003.0 385.4L1004.0 388.0L1005.0 390.3L1006.0 392.5L1007.0 394.4L1008.0 396.2L1009.0 397.8L1010.0 399.2L1011.0 400.4L1012.0 401.4L1013.0 402.2L1014.0 402.8L1015.0 403.2L1016.0 403.4L1017.0 403.4L1018.0 403.1L1019.0 402.7L1020.0 402.0L1021.0 401.2L1022.0 400.1L1023.0 398.9L1024.0 397.4L1025.0 395.8L1026.0 393.9L1027.0 391.9L1028.0 389.7L1029.0 387.3L1030.0 384.7L1031.0 382.0L1032.0 379.1L1033.0 376.0L1034.0 372.8L1035.0 369.5L1036.0 366.0L1037.0 362.4L1038.0 358.7L1039.0 354.9L1040.0 350.9L1041.0 346.9L1042.0 342.7L1043.0 338.5L1044.0 334.3L1045.0 329.9L1046.0 325.5L1047.0 321.1L1048.0 316.7L1049.0 312.2L1050.0 307.7L1051.0 303.2L1052.0 298.7L1053.0 294.2L1054.0 289.8L1055.0 285.4L1056.0 281.0L1057.0 276.7L1058.0 272.4L1059.0 268.2L1060.0 264.1L1061.0 260.1L1062.0 256.2L1063.0 252.4L1064.0 248.7L1065.0 245.1L1066.0 241.7L1067.0 238.3L1068.0 235.2L1069.0 232.2L1070.0 229.3L1071.0 226.6L1072.0 224.1L1073.0 221.8L1074.0 219.6L1075.0 217.6L1076.0 215.8L1077.0 214.2L1078.0 212.8L1079.0 211.6L1080.0 210.6L1081.0 209.8L1082.0 209.2L1083.0 208.8L1084.0 208.6L1085.0 208.6L1086.0 208.9L1087.0 209.3L1088.0 209.9L1089.0 210.8L1090.0 211.8L1091.0 213.1L1092.0 214.5L1093.0 216.2L1094.0 218.0L1095.0 220.1L1096.0 222.3L1097.0 224.7L1098.0 227.2L1099.0 229.9L1100.0 232.8L1101.0 235.9L1102.0 239.1L1103.0 242.4L1104.0 245.9L1105.0 249.5L1106.0 253.2L1107.0 257.1L1108.0 261.0L1109.0 265.0L1110.0 269.2L1111.0 273.4L1112.0 277.6L1113.0 282.0L1114.0 286.3L1115.0 290.8L1116.0 295.2L1117.0 299.7L1118.0 304.2L1119.0 308.7L1120.0 313.2L1121.0 317.7"/>
<path stroke="#2a8ee2" stroke-width="1.5" d="M30.0 326.5L31.0 324.7L32.0 305.5L33.0 299.6L34.0 293.7L35.0 290.2L36.0 286.5L37.0 283.8L38.0 282.2L39.0 280.6L40.0 279.1L41.0 277.8L42.0 276.9L43.0 276.0L44.0 275.2L45.0 274.5L46.0 273.7L47.0 273.1L48.0 272.6L49.0 272.2L50.0 272.0L51.0 271.9L52.0 271.9L53.0 272.0L54.0 272.2L55.0 272.5L56.0 272.8L57.0 273.3L58.0 273.9L59.0 274.6L60.0 275.5L61.0 276.4L62.0 277.5L63.0 278.7L64.0 279.9L65.0 281.3L66.0 282.7L67.0 284.3L68.0 285.9L69.0 286.9L70.0 288.7L71.0 290.6L72.0 292.6L73.0 294.7L74.0 296.8L75.0 299.0L76.0 301.2L77.0 303.5L78.0 305.9L79.0 308.3L80.0 310.7L81.0 313.1L82.0 315.6L83.0 318.1L84.0 320.6L85.0 323.1L86.0 325.6L87.0 328.1L88.0 330.6L89.0 333.0L90.0 335.5L91.0 337.9L92.0 340.2L93.0 342.5L94.0 344.8L95.0 347.0L96.0 349.1L97.0 351.2L98.0 353.2L99.0 355.1L100.0 356.8L101.0 358.5L102.0 360.1L103.0 361.6L104.0 363.0L105.0 364.3L106.0 365.5L107.0 366.5L108.0 367.4L109.0 368.2L110.0 368.9L111.0 369.4L112.0 369.7L113.0 370.0L114.0 370.0L115.0 370.0L116.0 369.7L117.0 369.4L118.0 368.9L119.0 367.9L120.0 367.1L121.0 366.1L122.0 364.9L123.0 363.5L124.0 362.1L125.0 360.5L126.0 358.8L127.0 356.9L128.0 354.9L129.0 352.8L130.0 350.5L131.0 348.2L132.0 345.7L133.0 343.2L134.0 340.5L135.0 337.7L136.0 334.9L137.0 331.9L138.0 328.9L139.0 325.8L140.0 322.6L141.0 319.4L142.0 316.1L143.0 312.7L144.0 309.4L145.0 306.0L146.0 302.6L147.0 299.1L148.0 295.7L149.0 292.2L150.0 288.8L151.0 285.4L152.0 282.0L153.0 278.6L154.0 275.3L155.0 272.0L156.0 268.8L157.0 264.9L158.0 261.9L159.0 258.9L160.0 256.0L161.0 253.2L162.0 250.5L163.0 247.9L164.0 245.4L165.0 243.0L166.0 240.7L167.0 238.6L168.0 236.6L169.0 234.8L170.0 233.1L171.0 231.5L172.0 230.1L173.0 228.9L174.0 227.8L175.0 226.9L176.0 226.1L177.0 225.6L178.0 225.2L179.0 225.0L180.0 225.0L181.0 225.2L182.0 225.5L183.0 226.0L184.0 226.7L185.0 227.6L186.0 228.6L187.0 229.8L188.0 231.6L189.0 233.1L190.0 234.9L191.0 236.8L192.0 238.8L193.0 241.0L194.0 243.4L195.0 245.9L196.0 248.5L197.0 251.3L198.0 254.2L199.0 257.2L200.0 260.4L201.0 263.6L202.0 267.0L203.0 270.4L204.0 274.0L205.0 277.6L206.0 281.3L207.0 285.0L208.0 288.8L209.0 292.7L210.0 296.6L211.0 300.5L212.0 304.5L213.0 308.5L214.0 312.4L215.0 316.4L216.0 320.4L217.0 324.9L218.0 328.8L219.0 332.7L220.0 336.5L221.0 340.3L222.0 344.0L223.0 347.6L224.0 351.1L225.0 354.6L226.0 358.0L227.0 361.2L228.0 364.4L229.0 367.4L230.0 370.3L231.0 373.1L232.0 375.7L233.0 378.2L234.0 380.6L235.0 382.7L236.0 384.8L237.0 386.6L238.0 388.3L239.0 389.9L240.0 391.2L241.0 392.4L242.0 393.4L243.0 394.2L244.0 394.8L245.0 395.3L246.0 395.5L247.0 395.5L248.0 395.4L249.0 395.0L250.0 394.5L251.0 393.7L252.0 392.8L253.0 391.6L254.0 390.1L255.0 388.6L256.0 386.9L257.0 385.0L258.0 382.9L259.0 380.7L260.0 378.3L261.0 375.8L262.0 373.1L263.0 370.3L264.0 367.3L265.0 364.2L266.0 360.9L267.0 357.6L268.0 354.1L269.0 350.5L270.0 346.8L271.0 343.0L272.0 339.2L273.0 335.2L274.0 331.2L275.0 327.1L276.0 323.0L277.0 318.8L278.0 314.6L279.0 310.4L280.0 306.2L281.0 301.9L282.0 297.7L283.0 293.4L284.0 289.2L285.0 285.0L286.0 280.9L287.0 276.8L288.0 272.2L289.0 268.2L290.0 264.4L291.0 260.6L292.0 256.9L293.0 253.3L294.0 249.8L295.0 246.4L296.0 243.2L297.0 240.1L298.0 237.1L299.0 234.3L300.0 231.6L301.0 229.0L302.0 226.7L303.0 224.5L304.0 222.5L305.0 220.6L306.0 218.9L307.0 217.5L308.0 216.2L309.0 215.1L310.0 214.2L311.0 213.5L312.0 212.9L313.0 212.6L314.0 212.5L315.0 212.6L316.0 212.9L317.0 213.4L318.0 214.0L319.0 214.9L320.0 216.0L321.0 217.3L322.0 218.7L323.0 220.4L324.0 222.2L325.0 224.2L326.0 226.4L327.0 228.7L328.0 231.3L329.0 233.9L330.0 236.8L331.0 239.8L332.0 242.9L333.0 246.2L334.0 249.6L335.0 253.1L336.0 256.7L337.0 260.5L338.0 264.3L339.0 268.3L340.0 272.3L341.0 276.4L342.0 280.6L343.0 285.4L344.0 289.7L345.0 294.0L346.0 298.4L347.0 302.7L348.0 307.1L349.0 311.5L350.0 315.8L351.0 320.2L352.0 324.5L353.0 328.8L354.0 333.0L355.0 337.2L356.0 341.3L357.0 345.4L358.0 349.3L359.0 353.2L360.0 357.0L361.0 360.6L362.0 364.2L363.0 367.6L364.0 370.9L365.0 374.1L366.0 377.1L367.0 379.9L368.0 382.7L369.0 385.2L370.0 387.6L371.0 389.8L372.0 391.8L373.0 393.7L374.0 395.3L375.0 396.8L376.0 398.1L377.0 399.1L378.0 400.0L379.0 400.7L380.0 401.2L381.0 401.5L382.0 401.5L383.0 401.4L384.0 401.1L385.0 400.5L386.0 399.8L387.0 398.9L388.0 397.7L389.0 396.4L390.0 394.9L391.0 393.1L392.0 391.2L393.0 389.2L394.0 386.9L395.0 384.4L396.0 381.8L397.0 379.1L398.0 376.1L399.0 373.0L400.0 369.8L401.0 366.5L402.0 363.0L403.0 359.3L404.0 355.6L405.0 351.8L406.0 347.8L407.0 343.8L408.0 339.7L409.0 335.5L410.0 331.3L411.0 327.0L412.0 322.0L413.0 317.6L414.0 313.2L415.0 308.8L416.0 304.3L417.0 299.9L418.0 295.5L419.0 291.1L420.0 286.7L421.0 282.4L422.0 278.1L423.0 273.8L424.0 269.7L425.0 265.6L426.0 261.6L427.0 257.7L428.0 253.9L429.0 250.2L430.0 246.6L431.0 243.2L432.0 239.9L433.0 236.7L434.0 233.7L435.0 230.8L436.0 228.1L437.0 225.5L438.0 223.2L439.0 221.0L440.0 218.9L441.0 217.1L442.0 215.5L443.0 214.0L444.0 212.8L445.0 211.7L446.0 210.9L447.0 210.2L448.0 209.8L449.0 209.5L450.0 209.5L451.0 209.6L452.0 210.0L453.0 210.6L454.0 211.4L455.0 212.4L456.0 213.6L457.0 214.9L458.0 216.5L459.0 218.3L460.0 220.2L461.0 222.4L462.0 224.7L463.0 227.2L464.0 229.9L465.0 232.7L466.0 235.7L467.0 238.8L468.0 242.1L469.0 245.5L470.0 249.0L471.0 252.7L472.0 256.5L473.0 260.3L474.0 264.3L475.0 268.4L476.0 272.5L477.0 276.8L478.0 281.1L479.0 285.4L480.0 289.8L481.0 294.2L482.0 298.7L483.0 303.1L484.0 307.6L485.0 312.1L486.0 316.5L487.0 320.9L488.0 325.4L489.0 329.7L490.0 334.0L491.0 338.3L492.0 342.5L493.0 346.6L494.0 350.6L495.0 354.5L496.0 358.4L497.0 362.1L498.0 365.7L499.0 369.1L500.0 372.5L501.0 375.7L502.0 378.7L503.0 381.6L504.0 384.3L505.0 386.9L506.0 389.3L507.0 391.5L508.0 393.5L509.0 395.4L510.0 397.1L511.0 398.5L512.0 399.8L513.0 400.8L514.0 401.8L515.0 402.5L516.0 403.1L517.0 403.4L518.0 403.4L519.0 403.2L520.0 402.8L521.0 402.3L522.0 401.5L523.0 400.3L524.0 398.7L525.0 397.3L526.0 395.7L527.0 393.9L528.0 392.0L529.0 390.1L530.0 388.0L531.0 385.5L532.0 382.8L533.0 380.0L534.0 377.0L535.0 373.8L536.0 370.5L537.0 367.1L538.0 363.5L539.0 359.8L540.0 356.0L541.0 352.1L542.0 348.1L543.0 344.0L544.0 339.8L545.0 335.5L546.0 331.2L547.0 326.8L548.0 322.4L549.0 318.0L550.0 313.5L551.0 308.4L552.0 303.9L553.0 299.4L554.0 294.9L555.0 290.4L556.0 286.0L557.0 281.6L558.0 277.3L559.0 273.0L560.0 268.8L561.0 264.7L562.0 260.7L563.0 257.3L564.0 253.5L565.0 249.7L566.0 246.1L567.0 242.7L568.0 239.3L569.0 236.1L570.0 233.0L571.0 229.7L572.0 227.0L573.0 224.5L574.0 222.1L575.0 219.9L576.0 217.9L577.0 216.1L578.0 214.4L579.0 213.0L580.0 211.8L581.0 210.7L582.0 209.9L583.0 209.3L584.0 208.8L585.0 208.6L586.0 208.6L587.0 208.8L588.0 209.2L589.0 209.8L590.0 210.7L591.0 211.7L592.0 212.9L593.0 214.3L594.0 215.9L595.0 217.7L596.0 219.7L597.0 221.9L598.0 224.3L599.0 226.8L600.0 229.5L601.0 232.4L602.0 235.4L603.0 238.6L604.0 241.9L605.0 245.4L606.0 248.9L607.0 252.6L608.0 256.5L609.0 260.4L610.0 264.4L611.0 268.5L612.0 272.7L613.0 277.0L614.0 281.3L615.0 285.7L616.0 290.1L617.0 294.6L618.0 299.0L619.0 303.5L620.0 308.0L621.0 312.5L622.0 317.0L623.0 321.5L624.0 325.9L625.0 330.3L626.0 334.6L627.0 338.9L628.0 343.1L629.0 347.2L630.0 351.2L631.0 355.1L632.0 359.0L633.0 362.7L634.0 366.3L635.0 369.8L636.0 373.1L637.0 376.3L638.0 379.3L639.0 382.2L640.0 384.9L641.0 387.5L642.0 389.8L643.0 392.0L644.0 394.1L645.0 395.9L646.0 397.5L647.0 399.0L648.0 400.2L649.0 401.3L650.0 402.1L651.0 402.7L652.0 403.2L653.0 403.4L654.0 403.4L655.0 403.2L656.0 402.8L657.0 402.2L658.0 401.4L659.0 400.4L660.0 399.1L661.0 397.7L662.0 396.1L663.0 394.3L664.0 392.3L665.0 390.1L666.0 387.8L667.0 385.2L668.0 382.5L669.0 379.7L670.0 376.7L671.0 373.5L672.0 370.2L673.0 366.7L674.0 363.1L675.0 359.4L676.0 355.6L677.0 351.7L678.0 347.7L679.0 343.6L680.0 339.4L681.0 335.1L682.0 330.8L683.0 326.4L684.0 322.0L685.0 317.6L686.0 313.1L687.0 308.6L688.0 304.1L689.0 299.6L690.0 295.1L691.0 290.7L692.0 286.2L693.0 281.8L694.0 277.5L695.0 273.2L696.0 269.0L697.0 264.9L698.0 260.9L699.0 257.0L700.0 253.1L701.0 249.4L702.0 245.8L703.0 242.3L704.0 239.0L705.0 235.8L706.0 232.8L707.0 229.9L708.0 227.1L709.0 224.6L710.0 222.2L711.0 220.0L712.0 218.0L713.0 216.2L714.0 214.5L715.0 213.1L716.0 211.8L717.0 210.8L718.0 209.9L719.0 209.3L720.0 208.9L721.0 208.6L722.0 208.6L723.0 208.8L724.0 209.2L725.0 209.8L726.0 210.6L727.0 211.6L728.0 212.8L729.0 214.2L730.0 215.8L731.0 217.6L732.0 219.6L733.0 221.8L734.0 224.2L735.0 226.7L736.0 229.4L737.0 232.2L738.0 235.3L739.0 238.4L740.0 241.7L741.0 245.2L742.0 248.8L743.0 252.5L744.0 256.3L745.0 260.2L746.0 264.2L747.0 268.3L748.0 272.5L749.0 276.8L750.0 281.1L751.0 285.5L752.0 289.9L753.0 294.3L754.0 298.8L755.0 303.3L756.0 307.8L757.0 312.3L758.0 316.8L759.0 321.2L760.0 325.7L761.0 330.0L762.0 334.4L763.0 338.6L764.0 342.8L765.0 347.0L766.0 351.0L767.0 354.9L768.0 358.8L769.0 362.5L770.0 366.1L771.0 369.6L772.0 372.9L773.0 376.1L774.0 379.2L775.0 382.1L776.0 384.8L777.0 387.3L778.0 389.7L779.0 391.9L780.0 394.0L781.0 395.8L782.0 397.5L783.0 398.9L784.0 400.2L785.0 401.2L786.0 402.1L787.0 402.7L788.0 403.1L789.0 403.4L790.0 403.4L791.0 403.2L792.0 402.8L793.0 402.2L794.0 401.4L795.0 400.4L796.0 399.2L797.0 397.8L798.0 396.2L799.0 394.4L800.0 392.4L801.0 390.2L802.0 387.9L803.0 385.4L804.0 382.7L805.0 379.8L806.0 376.8L807.0 373.7L808.0 370.3L809.0 366.9L810.0 363.3L811.0 359.6L812.0 355.8L813.0 351.9L814.0 347.9L815.0 343.8L816.0 339.6L817.0 335.3L818.0 331.0L819.0 326.6L820.0 322.2L821.0 317.8L822.0 313.3L823.0 308.8L824.0 304.3L825.0 299.8L826.0 295.3L827.0 290.9L828.0 286.5L829.0 282.1L830.0 277.7L831.0 273.5L832.0 269.3L833.0 265.1L834.0 261.1L835.0 257.1L836.0 253.3L837.0 249.6L838.0 246.0L839.0 242.5L840.0 239.2L841.0 236.0L842.0 232.9L843.0 230.0L844.0 227.3L845.0 224.7L846.0 222.3L847.0 220.1L848.0 218.1L849.0 216.2L850.0 214.6L851.0 213.1L852.0 211.9L853.0 210.8L854.0 210.0L855.0 209.3L856.0 208.9L857.0 208.6L858.0 208.6L859.0 208.8L860.0 209.2L861.0 209.8L862.0 210.6L863.0 211.6L864.0 212.8L865.0 214.2L866.0 215.8L867.0 217.6L868.0 219.5L869.0 221.7L870.0 224.0L871.0 226.6L872.0 229.2L873.0 232.1L874.0 235.1L875.0 238.3L876.0 241.6L877.0 245.0L878.0 248.6L879.0 252.3L880.0 256.1L881.0 260.0L882.0 264.0L883.0 268.1L884.0 272.3L885.0 276.6L886.0 280.9L887.0 285.2L888.0 289.7L889.0 294.1L890.0 298.6L891.0 303.1L892.0 307.6L893.0 312.1L894.0 316.6L895.0 321.0L896.0 325.4L897.0 329.8L898.0 334.2L899.0 338.4L900.0 342.6L901.0 346.8L902.0 350.8L903.0 354.8L904.0 358.6L905.0 362.3L906.0 365.9L907.0 369.4L908.0 372.8L909.0 376.0L910.0 379.0L911.0 381.9L912.0 384.7L913.0 387.2L914.0 389.6L915.0 391.8L916.0 393.9L917.0 395.7L918.0 397.4L919.0 398.8L920.0 400.1L921.0 401.2L922.0 402.0L923.0 402.7L924.0 403.1L925.0 403.4L926.0 403.4L927.0 403.2L928.0 402.8L929.0 402.3L930.0 401.5L931.0 400.5L932.0 399.3L933.0 397.9L934.0 396.3L935.0 394.5L936.0 392.5L937.0 390.4L938.0 388.0L939.0 385.5L940.0 382.8L941.0 380.0L942.0 377.0L943.0 373.8L944.0 370.5L945.0 367.1L946.0 363.5L947.0 359.8L948.0 356.0L949.0 352.1L950.0 348.1L951.0 344.0L952.0 339.8L953.0 335.6L954.0 331.2L955.0 326.9L956.0 322.5L957.0 318.0L958.0 313.5L959.0 309.0L960.0 304.5L961.0 300.0L962.0 295.6L963.0 291.1L964.0 286.7L965.0 282.3L966.0 277.9L967.0 273.7L968.0 269.5L969.0 265.3L970.0 261.3L971.0 257.3L972.0 253.5L973.0 249.8L974.0 246.2L975.0 242.7L976.0 239.3L977.0 236.1L978.0 233.1L979.0 230.2L980.0 227.4L981.0 224.8L982.0 222.4L983.0 220.2L984.0 218.2L985.0 216.3L986.0 214.7L987.0 213.2L988.0 211.9L989.0 210.9L990.0 210.0L991.0 209.3L992.0 208.9L993.0 208.6L994.0 208.6L995.0 208.8L996.0 209.1L997.0 209.7L998.0 210.5L999.0 211.5L1000.0 212.7L1001.0 214.1L1002.0 215.7L1003.0 217.5L1004.0 219.4L1005.0 221.6L1006.0 223.9L1007.0 226.4L1008.0 229.1L1009.0 231.9L1010.0 234.9L1011.0 238.1L1012.0 241.4L1013.0 244.8L1014.0 248.4L1015.0 252.1L1016.0 255.9L1017.0 259.8L1018.0 263.8L1019.0 267.9L1020.0 272.1L1021.0 276.3L1022.0 280.7L1023.0 285.0L1024.0 289.4L1025.0 293.9L1026.0 298.4L1027.0 302.9L1028.0 307.3L1029.0 311.8L1030.0 316.3L1031.0 320.8L1032.0 325.2L1033.0 329.6L1034.0 333.9L1035.0 338.2L1036.0 342.4L1037.0 346.6L1038.0 350.6L1039.0 354.6L1040.0 358.4L1041.0 362.1L1042.0 365.8L1043.0 369.2L1044.0 372.6L1045.0 375.8L1046.0 378.9L1047.0 381.8L1048.0 384.5L1049.0 387.1L1050.0 389.5L1051.0 391.7L1052.0 393.8L1053.0 395.6L1054.0 397.3L1055.0 398.8L1056.0 400.0L1057.0 401.1L1058.0 402.0L1059.0 402.6L1060.0 403.1L1061.0 403.4L1062.0 403.4L1063.0 403.2L1064.0 402.9L1065.0 402.3L1066.0 401.5L1067.0 400.5L1068.0 399.3L1069.0 397.9L1070.0 396.4L1071.0 394.6L1072.0 392.6L1073.0 390.5L1074.0 388.1L1075.0 385.6L1076.0 383.0L1077.0 380.1L1078.0 377.1L1079.0 374.0L1080.0 370.7L1081.0 367.3L1082.0 363.7L1083.0 360.0L1084.0 356.2L1085.0 352.3L1086.0 348.3L1087.0 344.2L1088.0 340.0L1089.0 335.8L1090.0 331.5L1091.0 327.1L1092.0 322.7L1093.0 318.2L1094.0 313.8L1095.0 309.3L1096.0 304.8L1097.0 300.3L1098.0 295.8L1099.0 291.3L1100.0 286.9L1101.0 282.5L1102.0 278.2L1103.0 273.9L1104.0 269.7L1105.0 265.5L1106.0 261.5L1107.0 257.5L1108.0 253.7L1109.0 250.0L1110.0 246.3L1111.0 242.8L1112.0 239.5L1113.0 236.3L1114.0 233.2L1115.0 230.3L1116.0 227.5L1117.0 225.0L1118.0 222.6L1119.0 220.3L1120.0 218.3L1121.0 216.4"/>
<path stroke="#f07a24" stroke-width="1.5" d="M30.0 285.5L31.0 289.0L32.0 307.8L33.0 313.4L34.0 318.4L35.0 320.7L36.0 322.9L37.0 324.1L38.0 324.4L39.0 324.6L40.0 324.5L41.0 324.2L42.0 323.6L43.0 322.9L44.0 322.2L45.0 321.3L46.0 320.7L47.0 319.8L48.0 318.5L49.0 317.1L50.0 315.7L51.0 314.2L52.0 312.6L53.0 310.9L54.0 309.2L55.0 307.4L56.0 305.6L57.0 303.7L58.0 301.7L59.0 299.8L60.0 297.7L61.0 295.7L62.0 293.6L63.0 291.6L64.0 289.5L65.0 287.4L66.0 285.3L67.0 283.2L68.0 281.1L69.0 279.5L70.0 277.5L71.0 275.4L72.0 273.4L73.0 271.5L74.0 269.6L75.0 267.8L76.0 266.1L77.0 264.4L78.0 262.8L79.0 261.2L80.0 259.8L81.0 258.4L82.0 257.1L83.0 255.9L84.0 254.8L85.0 253.9L86.0 253.0L87.0 252.3L88.0 251.7L89.0 251.2L90.0 250.9L91.0 250.6L92.0 250.5L93.0 250.5L94.0 250.6L95.0 250.9L96.0 251.3L97.0 251.9L98.0 252.5L99.0 253.4L100.0 254.3L101.0 255.4L102.0 256.6L103.0 258.0L104.0 259.4L105.0 261.0L106.0 262.7L107.0 264.6L108.0 266.5L109.0 268.6L110.0 270.8L111.0 273.1L112.0 275.4L113.0 277.9L114.0 280.5L115.0 283.2L116.0 285.9L117.0 288.8L118.0 291.7L119.0 295.4L120.0 298.4L121.0 301.4L122.0 304.5L123.0 307.7L124.0 310.8L125.0 314.0L126.0 317.2L127.0 320.3L128.0 323.5L129.0 326.7L130.0 329.8L131.0 332.9L132.0 336.0L133.0 339.1L134.0 342.0L135.0 345.0L136.0 347.9L137.0 350.7L138.0 353.4L139.0 356.0L140.0 358.5L141.0 361.0L142.0 363.3L143.0 365.5L144.0 367.6L145.0 369.6L146.0 371.4L147.0 373.2L148.0 374.8L149.0 376.2L150.0 377.5L151.0 378.7L152.0 379.7L153.0 380.5L154.0 381.2L155.0 381.8L156.0 382.2L157.0 382.2L158.0 382.2L159.0 382.0L160.0 381.7L161.0 381.2L162.0 380.5L163.0 379.6L164.0 378.6L165.0 377.4L166.0 376.1L167.0 374.6L168.0 372.9L169.0 371.1L170.0 369.1L171.0 367.0L172.0 364.8L173.0 362.4L174.0 359.8L175.0 357.2L176.0 354.4L177.0 351.5L178.0 348.4L179.0 345.3L180.0 342.0L181.0 338.7L182.0 335.3L183.0 331.8L184.0 328.2L185.0 324.6L186.0 320.9L187.0 317.2L188.0 312.6L189.0 308.8L190.0 305.0L191.0 301.2L192.0 297.4L193.0 293.5L194.0 289.7L195.0 285.9L196.0 282.1L197.0 278.4L198.0 274.7L199.0 271.1L200.0 267.5L201.0 264.1L202.0 260.6L203.0 257.3L204.0 254.1L205.0 250.9L206.0 247.9L207.0 245.0L208.0 242.2L209.0 239.5L210.0 237.0L211.0 234.6L212.0 232.4L213.0 230.3L214.0 228.4L215.0 226.7L216.0 225.1L217.0 223.5L218.0 222.3L219.0 221.3L220.0 220.5L221.0 219.8L222.0 219.3L223.0 219.0L224.0 218.9L225.0 219.0L226.0 219.2L227.0 219.7L228.0 220.3L229.0 221.1L230.0 222.1L231.0 223.3L232.0 224.6L233.0 226.2L234.0 227.9L235.0 229.8L236.0 231.8L237.0 234.1L238.0 236.4L239.0 239.0L240.0 241.6L241.0 244.5L242.0 247.4L243.0 250.5L244.0 253.7L245.0 257.1L246.0 260.5L247.0 264.1L248.0 267.8L249.0 271.5L250.0 275.4L251.0 279.3L252.0 283.3L253.0 287.3L254.0 292.0L255.0 296.1L256.0 300.3L257.0 304.4L258.0 308.6L259.0 312.8L260.0 317.0L261.0 321.1L262.0 325.2L263.0 329.3L264.0 333.4L265.0 337.4L266.0 341.3L267.0 345.2L268.0 349.0L269.0 352.7L270.0 356.3L271.0 359.8L272.0 363.2L273.0 366.4L274.0 369.6L275.0 372.6L276.0 375.5L277.0 378.2L278.0 380.8L279.0 383.3L280.0 385.5L281.0 387.7L282.0 389.6L283.0 391.3L284.0 392.9L285.0 394.3L286.0 395.4L287.0 396.4L288.0 397.3L289.0 397.9L290.0 398.3L291.0 398.5L292.0 398.5L293.0 398.3L294.0 397.9L295.0 397.3L296.0 396.5L297.0 395.5L298.0 394.3L299.0 392.9L300.0 391.4L301.0 389.6L302.0 387.7L303.0 385.6L304.0 383.3L305.0 380.9L306.0 378.3L307.0 375.5L308.0 372.6L309.0 369.6L310.0 366.4L311.0 363.0L312.0 359.6L313.0 356.0L314.0 352.3L315.0 348.5L316.0 344.7L317.0 340.7L318.0 336.7L319.0 332.6L320.0 328.4L321.0 324.2L322.0 319.9L323.0 315.6L324.0 311.3L325.0 307.0L326.0 302.6L327.0 298.3L328.0 294.0L329.0 289.7L330.0 285.4L331.0 281.2L332.0 277.0L333.0 272.9L334.0 268.8L335.0 264.9L336.0 261.0L337.0 257.2L338.0 253.5L339.0 249.9L340.0 246.4L341.0 243.1L342.0 239.9L343.0 236.4L344.0 233.5L345.0 230.7L346.0 228.1L347.0 225.7L348.0 223.4L349.0 221.4L350.0 219.5L351.0 217.7L352.0 216.2L353.0 214.9L354.0 213.7L355.0 212.8L356.0 212.0L357.0 211.5L358.0 211.1L359.0 211.0L360.0 211.0L361.0 211.3L362.0 211.8L363.0 212.4L364.0 213.3L365.0 214.4L366.0 215.6L367.0 217.1L368.0 218.7L369.0 220.6L370.0 222.6L371.0 224.8L372.0 227.1L373.0 229.7L374.0 232.4L375.0 235.2L376.0 238.3L377.0 241.4L378.0 244.7L379.0 248.1L380.0 251.7L381.0 255.4L382.0 259.2L383.0 263.0L384.0 267.0L385.0 271.1L386.0 275.2L387.0 279.4L388.0 283.7L389.0 288.0L390.0 292.4L391.0 296.8L392.0 301.2L393.0 305.6L394.0 310.0L395.0 314.4L396.0 318.8L397.0 323.2L398.0 327.5L399.0 331.8L400.0 336.1L401.0 340.2L402.0 344.4L403.0 348.4L404.0 352.3L405.0 356.1L406.0 359.9L407.0 363.5L408.0 367.0L409.0 370.4L410.0 373.6L411.0 376.7L412.0 380.0L413.0 382.8L414.0 385.4L415.0 387.8L416.0 390.1L417.0 392.1L418.0 394.0L419.0 395.7L420.0 397.2L421.0 398.6L422.0 399.7L423.0 400.6L424.0 401.3L425.0 401.8L426.0 402.2L427.0 402.3L428.0 402.2L429.0 401.9L430.0 401.4L431.0 400.6L432.0 399.7L433.0 398.6L434.0 397.3L435.0 395.8L436.0 394.1L437.0 392.2L438.0 390.2L439.0 387.9L440.0 385.5L441.0 382.9L442.0 380.1L443.0 377.2L444.0 374.1L445.0 370.9L446.0 367.5L447.0 364.0L448.0 360.4L449.0 356.7L450.0 352.8L451.0 348.9L452.0 344.9L453.0 340.7L454.0 336.6L455.0 332.3L456.0 328.0L457.0 323.6L458.0 319.2L459.0 314.8L460.0 310.3L461.0 305.9L462.0 301.4L463.0 297.0L464.0 292.5L465.0 288.1L466.0 283.7L467.0 279.4L468.0 275.2L469.0 271.0L470.0 266.8L471.0 262.8L472.0 258.8L473.0 255.0L474.0 251.2L475.0 247.6L476.0 244.1L477.0 240.7L478.0 237.5L479.0 234.4L480.0 231.5L481.0 228.7L482.0 226.1L483.0 223.6L484.0 221.4L485.0 219.3L486.0 217.4L487.0 215.7L488.0 214.1L489.0 212.8L490.0 211.7L491.0 210.7L492.0 210.0L493.0 209.5L494.0 209.2L495.0 209.1L496.0 209.2L497.0 209.5L498.0 210.0L499.0 210.7L500.0 211.6L501.0 212.7L502.0 214.1L503.0 215.6L504.0 217.3L505.0 219.2L506.0 221.3L507.0 223.5L508.0 226.0L509.0 228.6L510.0 231.4L511.0 234.3L512.0 237.4L513.0 240.6L514.0 244.0L515.0 247.4L516.0 251.0L517.0 254.8L518.0 258.6L519.0 262.6L520.0 266.7L521.0 270.8L522.0 275.1L523.0 279.4L524.0 283.8L525.0 288.2L526.0 292.7L527.0 297.1L528.0 301.6L529.0 306.0L530.0 310.5L531.0 315.0L532.0 319.5L533.0 323.9L534.0 328.3L535.0 332.7L536.0 337.0L537.0 341.2L538.0 345.4L539.0 349.4L540.0 353.4L541.0 357.3L542.0 361.1L543.0 364.7L544.0 368.2L545.0 371.6L546.0 374.9L547.0 378.0L548.0 380.9L549.0 383.7L550.0 386.4L551.0 389.2L552.0 391.4L553.0 393.5L554.0 395.4L555.0 397.1L556.0 398.6L557.0 399.9L558.0 401.0L559.0 401.9L560.0 402.6L561.0 403.0L562.0 403.3L563.0 403.4L564.0 403.3L565.0 403.0L566.0 402.5L567.0 401.8L568.0 400.8L569.0 399.7L570.0 398.4L571.0 396.6L572.0 394.9L573.0 392.9L574.0 390.8L575.0 388.5L576.0 386.0L577.0 383.4L578.0 380.6L579.0 377.6L580.0 374.5L581.0 371.2L582.0 367.8L583.0 364.2L584.0 360.6L585.0 356.8L586.0 352.9L587.0 348.9L588.0 344.8L589.0 340.7L590.0 336.4L591.0 332.1L592.0 327.7L593.0 323.3L594.0 318.9L595.0 314.4L596.0 309.9L597.0 305.4L598.0 300.9L599.0 296.5L600.0 292.0L601.0 287.6L602.0 283.2L603.0 278.8L604.0 274.5L605.0 270.3L606.0 266.2L607.0 262.1L608.0 258.1L609.0 254.3L610.0 250.5L611.0 246.9L612.0 243.4L613.0 240.0L614.0 236.7L615.0 233.7L616.0 230.7L617.0 227.9L618.0 225.3L619.0 222.9L620.0 220.6L621.0 218.6L622.0 216.7L623.0 215.0L624.0 213.5L625.0 212.2L626.0 211.1L627.0 210.2L628.0 209.5L629.0 209.0L630.0 208.7L631.0 208.6L632.0 208.7L633.0 209.1L634.0 209.6L635.0 210.3L636.0 211.3L637.0 212.4L638.0 213.8L639.0 215.3L640.0 217.1L641.0 219.0L642.0 221.1L643.0 223.4L644.0 225.9L645.0 228.6L646.0 231.4L647.0 234.3L648.0 237.5L649.0 240.7L650.0 244.1L651.0 247.7L652.0 251.3L653.0 255.1L654.0 259.0L655.0 263.0L656.0 267.1L657.0 271.2L658.0 275.5L659.0 279.8L660.0 284.1L661.0 288.5L662.0 293.0L663.0 297.5L664.0 302.0L665.0 306.4L666.0 310.9L667.0 315.4L668.0 319.9L669.0 324.3L670.0 328.7L671.0 333.1L672.0 337.4L673.0 341.6L674.0 345.7L675.0 349.8L676.0 353.8L677.0 357.6L678.0 361.4L679.0 365.0L680.0 368.6L681.0 371.9L682.0 375.2L683.0 378.3L684.0 381.2L685.0 384.0L686.0 386.6L687.0 389.0L688.0 391.3L689.0 393.4L690.0 395.3L691.0 397.0L692.0 398.5L693.0 399.8L694.0 400.9L695.0 401.8L696.0 402.5L697.0 403.0L698.0 403.3L699.0 403.4L700.0 403.3L701.0 403.0L702.0 402.4L703.0 401.7L704.0 400.7L705.0 399.6L706.0 398.2L707.0 396.7L708.0 395.0L709.0 393.0L710.0 390.9L711.0 388.6L712.0 386.2L713.0 383.5L714.0 380.7L715.0 377.7L716.0 374.6L717.0 371.4L718.0 368.0L719.0 364.4L720.0 360.8L721.0 357.0L722.0 353.1L723.0 349.1L724.0 345.0L725.0 340.9L726.0 336.6L727.0 332.3L728.0 328.0L729.0 323.6L730.0 319.1L731.0 314.6L732.0 310.2L733.0 305.7L734.0 301.2L735.0 296.7L736.0 292.2L737.0 287.8L738.0 283.4L739.0 279.0L740.0 274.7L741.0 270.5L742.0 266.4L743.0 262.3L744.0 258.3L745.0 254.5L746.0 250.7L747.0 247.0L748.0 243.5L749.0 240.1L750.0 236.9L751.0 233.8L752.0 230.9L753.0 228.1L754.0 225.5L755.0 223.0L756.0 220.8L757.0 218.7L758.0 216.8L759.0 215.1L760.0 213.5L761.0 212.2L762.0 211.1L763.0 210.2L764.0 209.5L765.0 209.0L766.0 208.7L767.0 208.6L768.0 208.7L769.0 209.0L770.0 209.6L771.0 210.3L772.0 211.2L773.0 212.4L774.0 213.7L775.0 215.3L776.0 217.0L777.0 218.9L778.0 221.0L779.0 223.3L780.0 225.8L781.0 228.4L782.0 231.2L783.0 234.2L784.0 237.3L785.0 240.6L786.0 244.0L787.0 247.5L788.0 251.2L789.0 254.9L790.0 258.8L791.0 262.8L792.0 266.9L793.0 271.0L794.0 275.3L795.0 279.6L796.0 283.9L797.0 288.3L798.0 292.8L799.0 297.2L800.0 301.7L801.0 306.2L802.0 310.7L803.0 315.2L804.0 319.7L805.0 324.1L806.0 328.5L807.0 332.9L808.0 337.2L809.0 341.4L810.0 345.5L811.0 349.6L812.0 353.6L813.0 357.5L814.0 361.2L815.0 364.9L816.0 368.4L817.0 371.8L818.0 375.0L819.0 378.1L820.0 381.1L821.0 383.9L822.0 386.5L823.0 388.9L824.0 391.2L825.0 393.3L826.0 395.2L827.0 396.9L828.0 398.4L829.0 399.7L830.0 400.9L831.0 401.8L832.0 402.5L833.0 403.0L834.0 403.3L835.0 403.4L836.0 403.3L837.0 403.0L838.0 402.5L839.0 401.7L840.0 400.8L841.0 399.6L842.0 398.3L843.0 396.8L844.0 395.0L845.0 393.1L846.0 391.0L847.0 388.7L848.0 386.3L849.0 383.6L850.0 380.8L851.0 377.9L852.0 374.8L853.0 371.5L854.0 368.1L855.0 364.6L856.0 360.9L857.0 357.2L858.0 353.3L859.0 349.3L860.0 345.2L861.0 341.1L862.0 336.8L863.0 332.5L864.0 328.2L865.0 323.8L866.0 319.3L867.0 314.9L868.0 310.4L869.0 305.9L870.0 301.4L871.0 296.9L872.0 292.4L873.0 288.0L874.0 283.6L875.0 279.2L876.0 274.9L877.0 270.7L878.0 266.6L879.0 262.5L880.0 258.5L881.0 254.6L882.0 250.9L883.0 247.2L884.0 243.7L885.0 240.3L886.0 237.1L887.0 234.0L888.0 231.0L889.0 228.2L890.0 225.6L891.0 223.1L892.0 220.9L893.0 218.8L894.0 216.9L895.0 215.1L896.0 213.6L897.0 212.3L898.0 211.2L899.0 210.2L900.0 209.5L901.0 209.0L902.0 208.7L903.0 208.6L904.0 208.7L905.0 209.0L906.0 209.5L907.0 210.3L908.0 211.2L909.0 212.3L910.0 213.7L911.0 215.2L912.0 216.9L913.0 218.8L914.0 220.9L915.0 223.2L916.0 225.7L917.0 228.3L918.0 231.1L919.0 234.0L920.0 237.1L921.0 240.4L922.0 243.8L923.0 247.3L924.0 251.0L925.0 254.7L926.0 258.6L927.0 262.6L928.0 266.7L929.0 270.8L930.0 275.1L931.0 279.4L932.0 283.7L933.0 288.1L934.0 292.5L935.0 297.0L936.0 301.5L937.0 306.0L938.0 310.5L939.0 315.0L940.0 319.5L941.0 323.9L942.0 328.3L943.0 332.6L944.0 336.9L945.0 341.2L946.0 345.3L947.0 349.4L948.0 353.4L949.0 357.3L950.0 361.0L951.0 364.7L952.0 368.2L953.0 371.6L954.0 374.9L955.0 378.0L956.0 380.9L957.0 383.7L958.0 386.3L959.0 388.8L960.0 391.1L961.0 393.2L962.0 395.1L963.0 396.8L964.0 398.3L965.0 399.7L966.0 400.8L967.0 401.7L968.0 402.5L969.0 403.0L970.0 403.3L971.0 403.4L972.0 403.3L973.0 403.0L974.0 402.5L975.0 401.8L976.0 400.8L977.0 399.7L978.0 398.4L979.0 396.9L980.0 395.1L981.0 393.2L982.0 391.1L983.0 388.9L984.0 386.4L985.0 383.8L986.0 381.0L987.0 378.0L988.0 374.9L989.0 371.7L990.0 368.3L991.0 364.8L992.0 361.1L993.0 357.4L994.0 353.5L995.0 349.5L996.0 345.4L997.0 341.3L998.0 337.1L999.0 332.8L1000.0 328.4L1001.0 324.0L1002.0 319.6L1003.0 315.1L1004.0 310.6L1005.0 306.1L1006.0 301.6L1007.0 297.1L1008.0 292.7L1009.0 288.2L1010.0 283.8L1011.0 279.5L1012.0 275.2L1013.0 270.9L1014.0 266.8L1015.0 262.7L1016.0 258.7L1017.0 254.8L1018.0 251.1L1019.0 247.4L1020.0 243.9L1021.0 240.5L1022.0 237.2L1023.0 234.1L1024.0 231.2L1025.0 228.4L1026.0 225.7L1027.0 223.3L1028.0 221.0L1029.0 218.9L1030.0 217.0L1031.0 215.2L1032.0 213.7L1033.0 212.4L1034.0 211.2L1035.0 210.3L1036.0 209.5L1037.0 209.0L1038.0 208.7L1039.0 208.6L1040.0 208.7L1041.0 209.0L1042.0 209.5L1043.0 210.2L1044.0 211.1L1045.0 212.3L1046.0 213.6L1047.0 215.1L1048.0 216.8L1049.0 218.7L1050.0 220.8L1051.0 223.1L1052.0 225.5L1053.0 228.1L1054.0 230.9L1055.0 233.9L1056.0 237.0L1057.0 240.2L1058.0 243.6L1059.0 247.1L1060.0 250.8L1061.0 254.5L1062.0 258.4L1063.0 262.4L1064.0 266.5L1065.0 270.6L1066.0 274.8L1067.0 279.1L1068.0 283.5L1069.0 287.9L1070.0 292.3L1071.0 296.8L1072.0 301.3L1073.0 305.8L1074.0 310.3L1075.0 314.8L1076.0 319.2L1077.0 323.7L1078.0 328.1L1079.0 332.4L1080.0 336.7L1081.0 341.0L1082.0 345.1L1083.0 349.2L1084.0 353.2L1085.0 357.1L1086.0 360.8L1087.0 364.5L1088.0 368.0L1089.0 371.4L1090.0 374.7L1091.0 377.8L1092.0 380.8L1093.0 383.6L1094.0 386.2L1095.0 388.7L1096.0 391.0L1097.0 393.1L1098.0 395.0L1099.0 396.7L1100.0 398.3L1101.0 399.6L1102.0 400.8L1103.0 401.7L1104.0 402.4L1105.0 403.0L1106.0 403.3L1107.0 403.4L1108.0 403.3L1109.0 403.0L1110.0 402.5L1111.0 401.8L1112.0 400.9L1113.0 399.8L1114.0 398.5L1115.0 396.9L1116.0 395.2L1117.0 393.3L1118.0 391.2L1119.0 389.0L1120.0 386.5L1121.0 383.9"/>
</g>
<path d="M3 163.5H33" stroke="#f7e052" stroke-width="1.6" fill="none"/>
<text x="34.6" y="166.1" class="leg">ias</text>
<path d="M64 163.5H94" stroke="#2a8ee2" stroke-width="1.6" fill="none"/>
<text x="95.6" y="166.1" class="leg">ibs</text>
<path d="M125 163.5H155" stroke="#f07a24" stroke-width="1.6" fill="none"/>
<text x="156.6" y="166.1" class="leg">ics</text>
<text x="25.2" y="408.3" class="tk" text-anchor="end">-30</text>
<text x="25.2" y="375.3" class="tk" text-anchor="end">-20</text>
<text x="25.2" y="343.3" class="tk" text-anchor="end">-10</text>
<text x="25.2" y="310.3" class="tk" text-anchor="end">0</text>
<text x="25.2" y="277.3" class="tk" text-anchor="end">10</text>
<text x="25.2" y="245.3" class="tk" text-anchor="end">20</text>
<text x="25.2" y="212.3" class="tk" text-anchor="end">30</text>
</svg>
<svg class="plot" style="top:438px" width="1141" height="287" viewBox="0 438 1141 287">
<rect x="0" y="438" width="1141" height="1" fill="#d4d4d4"/>
<rect x="0" y="461" width="1141" height="1" fill="#d4d4d4"/>
<rect x="30" y="471" width="1092" height="245" fill="#111111"/>
<g shape-rendering="crispEdges" fill="#444444">
<rect x="121" y="471" width="1" height="244"/>
<rect x="211" y="471" width="1" height="244"/>
<rect x="302" y="471" width="1" height="244"/>
<rect x="393" y="471" width="1" height="244"/>
<rect x="484" y="471" width="1" height="244"/>
<rect x="574" y="471" width="1" height="244"/>
<rect x="665" y="471" width="1" height="244"/>
<rect x="756" y="471" width="1" height="244"/>
<rect x="846" y="471" width="1" height="244"/>
<rect x="937" y="471" width="1" height="244"/>
<rect x="1028" y="471" width="1" height="244"/>
<rect x="1118" y="471" width="1" height="244"/>
<rect x="30" y="691" width="1091" height="1"/>
<rect x="30" y="658" width="1091" height="1"/>
<rect x="30" y="626" width="1091" height="1"/>
<rect x="30" y="593" width="1091" height="1"/>
<rect x="30" y="560" width="1091" height="1"/>
<rect x="30" y="528" width="1091" height="1"/>
<rect x="30" y="495" width="1091" height="1"/>
</g>
<g shape-rendering="crispEdges" fill="#d8d8d8">
<rect x="30" y="471" width="1092" height="1"/>
<rect x="30" y="715" width="1092" height="1"/>
<rect x="30" y="471" width="1" height="245"/>
<rect x="1121" y="471" width="1" height="245"/>
<rect x="30" y="691" width="6" height="1"/>
<rect x="1115" y="691" width="7" height="1"/>
<rect x="30" y="658" width="6" height="1"/>
<rect x="1115" y="658" width="7" height="1"/>
<rect x="30" y="626" width="6" height="1"/>
<rect x="1115" y="626" width="7" height="1"/>
<rect x="30" y="593" width="6" height="1"/>
<rect x="1115" y="593" width="7" height="1"/>
<rect x="30" y="560" width="6" height="1"/>
<rect x="1115" y="560" width="7" height="1"/>
<rect x="30" y="528" width="6" height="1"/>
<rect x="1115" y="528" width="7" height="1"/>
<rect x="30" y="495" width="6" height="1"/>
<rect x="1115" y="495" width="7" height="1"/>
<rect x="30" y="707" width="4" height="1"/>
<rect x="1118" y="707" width="4" height="1"/>
<rect x="30" y="675" width="4" height="1"/>
<rect x="1118" y="675" width="4" height="1"/>
<rect x="30" y="642" width="4" height="1"/>
<rect x="1118" y="642" width="4" height="1"/>
<rect x="30" y="609" width="4" height="1"/>
<rect x="1118" y="609" width="4" height="1"/>
<rect x="30" y="577" width="4" height="1"/>
<rect x="1118" y="577" width="4" height="1"/>
<rect x="30" y="544" width="4" height="1"/>
<rect x="1118" y="544" width="4" height="1"/>
<rect x="30" y="512" width="4" height="1"/>
<rect x="1118" y="512" width="4" height="1"/>
<rect x="30" y="479" width="4" height="1"/>
<rect x="1118" y="479" width="4" height="1"/>
<rect x="30" y="471" width="1" height="7"/>
<rect x="30" y="709" width="1" height="7"/>
<rect x="48" y="471" width="1" height="4"/>
<rect x="48" y="712" width="1" height="4"/>
<rect x="66" y="471" width="1" height="4"/>
<rect x="66" y="712" width="1" height="4"/>
<rect x="84" y="471" width="1" height="4"/>
<rect x="84" y="712" width="1" height="4"/>
<rect x="103" y="471" width="1" height="4"/>
<rect x="103" y="712" width="1" height="4"/>
<rect x="121" y="471" width="1" height="7"/>
<rect x="121" y="709" width="1" height="7"/>
<rect x="139" y="471" width="1" height="4"/>
<rect x="139" y="712" width="1" height="4"/>
<rect x="157" y="471" width="1" height="4"/>
<rect x="157" y="712" width="1" height="4"/>
<rect x="175" y="471" width="1" height="4"/>
<rect x="175" y="712" width="1" height="4"/>
<rect x="193" y="471" width="1" height="4"/>
<rect x="193" y="712" width="1" height="4"/>
<rect x="211" y="471" width="1" height="7"/>
<rect x="211" y="709" width="1" height="7"/>
<rect x="230" y="471" width="1" height="4"/>
<rect x="230" y="712" width="1" height="4"/>
<rect x="248" y="471" width="1" height="4"/>
<rect x="248" y="712" width="1" height="4"/>
<rect x="266" y="471" width="1" height="4"/>
<rect x="266" y="712" width="1" height="4"/>
<rect x="284" y="471" width="1" height="4"/>
<rect x="284" y="712" width="1" height="4"/>
<rect x="302" y="471" width="1" height="7"/>
<rect x="302" y="709" width="1" height="7"/>
<rect x="320" y="471" width="1" height="4"/>
<rect x="320" y="712" width="1" height="4"/>
<rect x="338" y="471" width="1" height="4"/>
<rect x="338" y="712" width="1" height="4"/>
<rect x="357" y="471" width="1" height="4"/>
<rect x="357" y="712" width="1" height="4"/>
<rect x="375" y="471" width="1" height="4"/>
<rect x="375" y="712" width="1" height="4"/>
<rect x="393" y="471" width="1" height="7"/>
<rect x="393" y="709" width="1" height="7"/>
<rect x="411" y="471" width="1" height="4"/>
<rect x="411" y="712" width="1" height="4"/>
<rect x="429" y="471" width="1" height="4"/>
<rect x="429" y="712" width="1" height="4"/>
<rect x="447" y="471" width="1" height="4"/>
<rect x="447" y="712" width="1" height="4"/>
<rect x="465" y="471" width="1" height="4"/>
<rect x="465" y="712" width="1" height="4"/>
<rect x="484" y="471" width="1" height="7"/>
<rect x="484" y="709" width="1" height="7"/>
<rect x="502" y="471" width="1" height="4"/>
<rect x="502" y="712" width="1" height="4"/>
<rect x="520" y="471" width="1" height="4"/>
<rect x="520" y="712" width="1" height="4"/>
<rect x="538" y="471" width="1" height="4"/>
<rect x="538" y="712" width="1" height="4"/>
<rect x="556" y="471" width="1" height="4"/>
<rect x="556" y="712" width="1" height="4"/>
<rect x="574" y="471" width="1" height="7"/>
<rect x="574" y="709" width="1" height="7"/>
<rect x="592" y="471" width="1" height="4"/>
<rect x="592" y="712" width="1" height="4"/>
<rect x="610" y="471" width="1" height="4"/>
<rect x="610" y="712" width="1" height="4"/>
<rect x="629" y="471" width="1" height="4"/>
<rect x="629" y="712" width="1" height="4"/>
<rect x="647" y="471" width="1" height="4"/>
<rect x="647" y="712" width="1" height="4"/>
<rect x="665" y="471" width="1" height="7"/>
<rect x="665" y="709" width="1" height="7"/>
<rect x="683" y="471" width="1" height="4"/>
<rect x="683" y="712" width="1" height="4"/>
<rect x="701" y="471" width="1" height="4"/>
<rect x="701" y="712" width="1" height="4"/>
<rect x="719" y="471" width="1" height="4"/>
<rect x="719" y="712" width="1" height="4"/>
<rect x="737" y="471" width="1" height="4"/>
<rect x="737" y="712" width="1" height="4"/>
<rect x="756" y="471" width="1" height="7"/>
<rect x="756" y="709" width="1" height="7"/>
<rect x="774" y="471" width="1" height="4"/>
<rect x="774" y="712" width="1" height="4"/>
<rect x="792" y="471" width="1" height="4"/>
<rect x="792" y="712" width="1" height="4"/>
<rect x="810" y="471" width="1" height="4"/>
<rect x="810" y="712" width="1" height="4"/>
<rect x="828" y="471" width="1" height="4"/>
<rect x="828" y="712" width="1" height="4"/>
<rect x="846" y="471" width="1" height="7"/>
<rect x="846" y="709" width="1" height="7"/>
<rect x="864" y="471" width="1" height="4"/>
<rect x="864" y="712" width="1" height="4"/>
<rect x="883" y="471" width="1" height="4"/>
<rect x="883" y="712" width="1" height="4"/>
<rect x="901" y="471" width="1" height="4"/>
<rect x="901" y="712" width="1" height="4"/>
<rect x="919" y="471" width="1" height="4"/>
<rect x="919" y="712" width="1" height="4"/>
<rect x="937" y="471" width="1" height="7"/>
<rect x="937" y="709" width="1" height="7"/>
<rect x="955" y="471" width="1" height="4"/>
<rect x="955" y="712" width="1" height="4"/>
<rect x="973" y="471" width="1" height="4"/>
<rect x="973" y="712" width="1" height="4"/>
<rect x="991" y="471" width="1" height="4"/>
<rect x="991" y="712" width="1" height="4"/>
<rect x="1010" y="471" width="1" height="4"/>
<rect x="1010" y="712" width="1" height="4"/>
<rect x="1028" y="471" width="1" height="7"/>
<rect x="1028" y="709" width="1" height="7"/>
<rect x="1046" y="471" width="1" height="4"/>
<rect x="1046" y="712" width="1" height="4"/>
<rect x="1064" y="471" width="1" height="4"/>
<rect x="1064" y="712" width="1" height="4"/>
<rect x="1082" y="471" width="1" height="4"/>
<rect x="1082" y="712" width="1" height="4"/>
<rect x="1100" y="471" width="1" height="4"/>
<rect x="1100" y="712" width="1" height="4"/>
<rect x="1118" y="471" width="1" height="7"/>
<rect x="1118" y="709" width="1" height="7"/>
</g>
<clipPath id="cp1"><rect x="30" y="471" width="1092" height="245"/></clipPath>
<g clip-path="url(#cp1)" fill="none" stroke-linejoin="round" stroke-linecap="butt">
<path stroke="#f7e052" stroke-width="1.5" d="M30.0 593.0L31.0 591.3L32.0 591.7L33.0 591.9L34.0 592.9L35.0 594.1L36.0 595.6L37.0 597.1L38.0 598.4L39.0 599.8L40.0 601.4L41.0 603.0L42.0 604.5L43.0 606.0L44.0 607.6L45.0 609.2L46.0 610.6L47.0 612.2L48.0 613.9L49.0 615.6L50.0 617.3L51.0 618.9L52.0 620.5L53.0 622.1L54.0 623.6L55.0 625.1L56.0 626.6L57.0 628.0L58.0 629.3L59.0 630.6L60.0 631.8L61.0 632.8L62.0 633.8L63.0 634.8L64.0 635.6L65.0 636.4L66.0 637.0L67.0 637.6L68.0 638.0L69.0 638.5L70.0 638.8L71.0 639.0L72.0 639.0L73.0 638.8L74.0 638.6L75.0 638.2L76.0 637.7L77.0 637.1L78.0 636.4L79.0 635.5L80.0 634.6L81.0 633.5L82.0 632.3L83.0 631.0L84.0 629.5L85.0 628.0L86.0 626.3L87.0 624.6L88.0 622.7L89.0 620.7L90.0 618.7L91.0 616.5L92.0 614.3L93.0 612.0L94.0 609.6L95.0 607.1L96.0 604.6L97.0 602.0L98.0 599.3L99.0 596.6L100.0 593.8L101.0 591.1L102.0 588.2L103.0 585.4L104.0 582.5L105.0 579.7L106.0 576.8L107.0 573.9L108.0 571.1L109.0 568.2L110.0 565.4L111.0 562.6L112.0 559.8L113.0 557.1L114.0 554.5L115.0 551.9L116.0 549.3L117.0 546.9L118.0 544.5L119.0 541.8L120.0 539.6L121.0 537.5L122.0 535.6L123.0 533.8L124.0 532.1L125.0 530.5L126.0 529.1L127.0 527.8L128.0 526.6L129.0 525.5L130.0 524.6L131.0 523.9L132.0 523.3L133.0 522.8L134.0 522.5L135.0 522.3L136.0 522.3L137.0 522.4L138.0 522.7L139.0 523.2L140.0 523.9L141.0 524.7L142.0 525.6L143.0 526.8L144.0 528.0L145.0 529.4L146.0 531.0L147.0 532.7L148.0 534.6L149.0 536.5L150.0 538.7L151.0 540.9L152.0 543.3L153.0 545.8L154.0 548.5L155.0 551.2L156.0 554.1L157.0 557.8L158.0 560.9L159.0 564.1L160.0 567.3L161.0 570.7L162.0 574.1L163.0 577.5L164.0 581.0L165.0 584.6L166.0 588.2L167.0 591.8L168.0 595.4L169.0 599.1L170.0 602.8L171.0 606.4L172.0 610.1L173.0 613.7L174.0 617.3L175.0 620.9L176.0 624.5L177.0 628.0L178.0 631.4L179.0 634.7L180.0 637.9L181.0 641.1L182.0 644.2L183.0 647.2L184.0 650.1L185.0 652.8L186.0 655.5L187.0 658.0L188.0 660.8L189.0 663.0L190.0 665.1L191.0 667.0L192.0 668.8L193.0 670.5L194.0 671.9L195.0 673.2L196.0 674.3L197.0 675.3L198.0 676.1L199.0 676.7L200.0 677.1L201.0 677.3L202.0 677.4L203.0 677.3L204.0 677.0L205.0 676.5L206.0 675.8L207.0 675.0L208.0 674.0L209.0 672.8L210.0 671.4L211.0 669.9L212.0 668.1L213.0 666.2L214.0 664.1L215.0 661.9L216.0 659.5L217.0 656.5L218.0 653.8L219.0 651.0L220.0 648.0L221.0 644.9L222.0 641.7L223.0 638.4L224.0 635.0L225.0 631.4L226.0 627.8L227.0 624.1L228.0 620.3L229.0 616.5L230.0 612.6L231.0 608.6L232.0 604.6L233.0 600.6L234.0 596.6L235.0 592.5L236.0 588.4L237.0 584.3L238.0 580.2L239.0 576.2L240.0 572.1L241.0 568.1L242.0 564.2L243.0 560.3L244.0 556.4L245.0 552.7L246.0 549.0L247.0 545.4L248.0 541.8L249.0 538.5L250.0 535.2L251.0 532.0L252.0 529.0L253.0 526.1L254.0 522.9L255.0 520.3L256.0 517.9L257.0 515.6L258.0 513.4L259.0 511.5L260.0 509.7L261.0 508.1L262.0 506.6L263.0 505.4L264.0 504.3L265.0 503.4L266.0 502.7L267.0 502.2L268.0 501.9L269.0 501.8L270.0 501.9L271.0 502.2L272.0 502.7L273.0 503.3L274.0 504.2L275.0 505.3L276.0 506.5L277.0 507.9L278.0 509.5L279.0 511.3L280.0 513.3L281.0 515.4L282.0 517.8L283.0 520.2L284.0 522.9L285.0 525.7L286.0 528.7L287.0 531.7L288.0 535.5L289.0 538.9L290.0 542.4L291.0 546.0L292.0 549.7L293.0 553.5L294.0 557.3L295.0 561.3L296.0 565.4L297.0 569.5L298.0 573.6L299.0 577.8L300.0 582.1L301.0 586.3L302.0 590.6L303.0 594.9L304.0 599.2L305.0 603.5L306.0 607.8L307.0 612.0L308.0 616.2L309.0 620.4L310.0 624.5L311.0 628.5L312.0 632.5L313.0 636.4L314.0 640.2L315.0 643.9L316.0 647.4L317.0 650.9L318.0 654.3L319.0 657.5L320.0 660.6L321.0 663.6L322.0 666.4L323.0 669.0L324.0 671.5L325.0 673.8L326.0 676.0L327.0 678.0L328.0 679.8L329.0 681.4L330.0 682.8L331.0 684.0L332.0 685.1L333.0 685.9L334.0 686.6L335.0 687.0L336.0 687.3L337.0 687.3L338.0 687.2L339.0 686.8L340.0 686.3L341.0 685.5L342.0 684.6L343.0 683.2L344.0 681.8L345.0 680.3L346.0 678.5L347.0 676.6L348.0 674.4L349.0 672.2L350.0 669.7L351.0 667.1L352.0 664.3L353.0 661.3L354.0 658.2L355.0 655.0L356.0 651.6L357.0 648.2L358.0 644.5L359.0 640.8L360.0 637.0L361.0 633.1L362.0 629.1L363.0 625.0L364.0 620.8L365.0 616.6L366.0 612.3L367.0 608.0L368.0 603.6L369.0 599.2L370.0 594.8L371.0 590.4L372.0 586.1L373.0 581.7L374.0 577.3L375.0 573.0L376.0 568.7L377.0 564.4L378.0 560.3L379.0 556.1L380.0 552.1L381.0 548.2L382.0 544.3L383.0 540.5L384.0 536.9L385.0 533.4L386.0 530.0L387.0 526.7L388.0 523.6L389.0 520.6L390.0 517.8L391.0 515.1L392.0 512.6L393.0 510.3L394.0 508.1L395.0 506.1L396.0 504.3L397.0 502.7L398.0 501.3L399.0 500.1L400.0 499.1L401.0 498.3L402.0 497.7L403.0 497.3L404.0 497.1L405.0 497.1L406.0 497.3L407.0 497.7L408.0 498.3L409.0 499.1L410.0 500.1L411.0 501.3L412.0 503.0L413.0 504.6L414.0 506.4L415.0 508.4L416.0 510.6L417.0 513.0L418.0 515.5L419.0 518.2L420.0 521.1L421.0 524.1L422.0 527.2L423.0 530.5L424.0 534.0L425.0 537.5L426.0 541.2L427.0 545.0L428.0 548.9L429.0 552.9L430.0 557.0L431.0 561.2L432.0 565.4L433.0 569.7L434.0 574.0L435.0 578.4L436.0 582.8L437.0 587.2L438.0 591.7L439.0 596.1L440.0 600.6L441.0 605.0L442.0 609.4L443.0 613.8L444.0 618.1L445.0 622.4L446.0 626.6L447.0 630.8L448.0 634.8L449.0 638.8L450.0 642.7L451.0 646.4L452.0 650.1L453.0 653.6L454.0 657.1L455.0 660.3L456.0 663.5L457.0 666.4L458.0 669.3L459.0 671.9L460.0 674.4L461.0 676.7L462.0 678.9L463.0 680.9L464.0 682.6L465.0 684.2L466.0 685.6L467.0 686.8L468.0 687.8L469.0 688.6L470.0 689.2L471.0 689.5L472.0 689.7L473.0 689.7L474.0 689.4L475.0 689.0L476.0 688.4L477.0 687.5L478.0 686.5L479.0 685.2L480.0 683.8L481.0 682.1L482.0 680.3L483.0 678.3L484.0 676.1L485.0 673.7L486.0 671.1L487.0 668.4L488.0 665.5L489.0 662.5L490.0 659.3L491.0 656.0L492.0 652.5L493.0 648.9L494.0 645.2L495.0 641.4L496.0 637.5L497.0 633.5L498.0 629.3L499.0 625.2L500.0 620.9L501.0 616.6L502.0 612.2L503.0 607.8L504.0 603.4L505.0 598.9L506.0 594.4L507.0 590.0L508.0 585.5L509.0 581.0L510.0 576.6L511.0 572.2L512.0 567.8L513.0 563.5L514.0 559.3L515.0 555.0L516.0 550.9L517.0 546.9L518.0 543.0L519.0 539.2L520.0 535.5L521.0 531.9L522.0 528.5L523.0 525.3L524.0 522.4L525.0 519.5L526.0 516.7L527.0 514.0L528.0 511.5L529.0 508.9L530.0 506.5L531.0 504.5L532.0 502.7L533.0 501.1L534.0 499.7L535.0 498.5L536.0 497.5L537.0 496.7L538.0 496.2L539.0 495.8L540.0 495.6L541.0 495.6L542.0 495.9L543.0 496.3L544.0 497.0L545.0 497.8L546.0 498.9L547.0 500.2L548.0 501.6L549.0 503.3L550.0 505.1L551.0 507.5L552.0 509.7L553.0 512.2L554.0 514.7L555.0 517.5L556.0 520.4L557.0 523.5L558.0 526.7L559.0 530.1L560.0 533.6L561.0 537.2L562.0 541.0L563.0 544.3L564.0 548.2L565.0 552.3L566.0 556.4L567.0 560.6L568.0 564.9L569.0 569.2L570.0 573.6L571.0 578.7L572.0 583.1L573.0 587.6L574.0 592.1L575.0 596.6L576.0 601.1L577.0 605.6L578.0 610.0L579.0 614.4L580.0 618.8L581.0 623.1L582.0 627.3L583.0 631.5L584.0 635.6L585.0 639.6L586.0 643.5L587.0 647.3L588.0 651.0L589.0 654.5L590.0 657.9L591.0 661.2L592.0 664.4L593.0 667.3L594.0 670.2L595.0 672.8L596.0 675.3L597.0 677.6L598.0 679.8L599.0 681.7L600.0 683.5L601.0 685.1L602.0 686.4L603.0 687.6L604.0 688.6L605.0 689.3L606.0 689.9L607.0 690.3L608.0 690.4L609.0 690.3L610.0 690.1L611.0 689.6L612.0 688.9L613.0 688.0L614.0 687.0L615.0 685.7L616.0 684.2L617.0 682.5L618.0 680.6L619.0 678.6L620.0 676.3L621.0 673.9L622.0 671.3L623.0 668.6L624.0 665.6L625.0 662.6L626.0 659.3L627.0 656.0L628.0 652.5L629.0 648.9L630.0 645.1L631.0 641.3L632.0 637.3L633.0 633.3L634.0 629.1L635.0 624.9L636.0 620.6L637.0 616.3L638.0 611.9L639.0 607.5L640.0 603.0L641.0 598.5L642.0 594.0L643.0 589.5L644.0 585.0L645.0 580.6L646.0 576.1L647.0 571.7L648.0 567.3L649.0 563.0L650.0 558.8L651.0 554.6L652.0 550.5L653.0 546.5L654.0 542.6L655.0 538.8L656.0 535.1L657.0 531.6L658.0 528.1L659.0 524.9L660.0 521.7L661.0 518.7L662.0 515.9L663.0 513.2L664.0 510.7L665.0 508.4L666.0 506.3L667.0 504.3L668.0 502.6L669.0 501.0L670.0 499.6L671.0 498.4L672.0 497.4L673.0 496.7L674.0 496.1L675.0 495.7L676.0 495.6L677.0 495.7L678.0 495.9L679.0 496.4L680.0 497.1L681.0 497.9L682.0 499.0L683.0 500.3L684.0 501.8L685.0 503.5L686.0 505.3L687.0 507.4L688.0 509.6L689.0 512.0L690.0 514.6L691.0 517.4L692.0 520.3L693.0 523.3L694.0 526.6L695.0 529.9L696.0 533.4L697.0 537.0L698.0 540.8L699.0 544.6L700.0 548.6L701.0 552.6L702.0 556.8L703.0 561.0L704.0 565.3L705.0 569.6L706.0 574.0L707.0 578.4L708.0 582.9L709.0 587.4L710.0 591.9L711.0 596.4L712.0 600.9L713.0 605.3L714.0 609.8L715.0 614.2L716.0 618.6L717.0 622.9L718.0 627.1L719.0 631.3L720.0 635.4L721.0 639.4L722.0 643.3L723.0 647.1L724.0 650.8L725.0 654.3L726.0 657.8L727.0 661.1L728.0 664.2L729.0 667.2L730.0 670.0L731.0 672.7L732.0 675.2L733.0 677.5L734.0 679.7L735.0 681.6L736.0 683.4L737.0 685.0L738.0 686.4L739.0 687.5L740.0 688.5L741.0 689.3L742.0 689.9L743.0 690.2L744.0 690.4L745.0 690.4L746.0 690.1L747.0 689.6L748.0 689.0L749.0 688.1L750.0 687.0L751.0 685.7L752.0 684.3L753.0 682.6L754.0 680.7L755.0 678.7L756.0 676.4L757.0 674.0L758.0 671.5L759.0 668.7L760.0 665.8L761.0 662.7L762.0 659.5L763.0 656.2L764.0 652.7L765.0 649.0L766.0 645.3L767.0 641.5L768.0 637.5L769.0 633.5L770.0 629.3L771.0 625.1L772.0 620.8L773.0 616.5L774.0 612.1L775.0 607.7L776.0 603.2L777.0 598.7L778.0 594.2L779.0 589.7L780.0 585.2L781.0 580.8L782.0 576.3L783.0 571.9L784.0 567.5L785.0 563.2L786.0 559.0L787.0 554.8L788.0 550.7L789.0 546.7L790.0 542.8L791.0 539.0L792.0 535.3L793.0 531.7L794.0 528.3L795.0 525.0L796.0 521.9L797.0 518.9L798.0 516.0L799.0 513.4L800.0 510.9L801.0 508.5L802.0 506.4L803.0 504.4L804.0 502.6L805.0 501.1L806.0 499.7L807.0 498.5L808.0 497.5L809.0 496.7L810.0 496.1L811.0 495.8L812.0 495.6L813.0 495.6L814.0 495.9L815.0 496.4L816.0 497.0L817.0 497.9L818.0 499.0L819.0 500.2L820.0 501.7L821.0 503.4L822.0 505.2L823.0 507.3L824.0 509.5L825.0 511.9L826.0 514.5L827.0 517.2L828.0 520.1L829.0 523.2L830.0 526.4L831.0 529.8L832.0 533.2L833.0 536.9L834.0 540.6L835.0 544.4L836.0 548.4L837.0 552.4L838.0 556.6L839.0 560.8L840.0 565.1L841.0 569.4L842.0 573.8L843.0 578.2L844.0 582.7L845.0 587.2L846.0 591.7L847.0 596.1L848.0 600.6L849.0 605.1L850.0 609.6L851.0 614.0L852.0 618.3L853.0 622.7L854.0 626.9L855.0 631.1L856.0 635.2L857.0 639.2L858.0 643.1L859.0 646.9L860.0 650.6L861.0 654.2L862.0 657.6L863.0 660.9L864.0 664.1L865.0 667.1L866.0 669.9L867.0 672.6L868.0 675.1L869.0 677.4L870.0 679.6L871.0 681.5L872.0 683.3L873.0 684.9L874.0 686.3L875.0 687.5L876.0 688.5L877.0 689.3L878.0 689.9L879.0 690.2L880.0 690.4L881.0 690.4L882.0 690.1L883.0 689.7L884.0 689.0L885.0 688.1L886.0 687.1L887.0 685.8L888.0 684.3L889.0 682.7L890.0 680.8L891.0 678.8L892.0 676.6L893.0 674.2L894.0 671.6L895.0 668.8L896.0 665.9L897.0 662.9L898.0 659.7L899.0 656.3L900.0 652.8L901.0 649.2L902.0 645.5L903.0 641.7L904.0 637.7L905.0 633.7L906.0 629.5L907.0 625.3L908.0 621.1L909.0 616.7L910.0 612.3L911.0 607.9L912.0 603.4L913.0 599.0L914.0 594.5L915.0 590.0L916.0 585.5L917.0 581.0L918.0 576.5L919.0 572.1L920.0 567.8L921.0 563.4L922.0 559.2L923.0 555.0L924.0 550.9L925.0 546.9L926.0 543.0L927.0 539.2L928.0 535.5L929.0 531.9L930.0 528.5L931.0 525.2L932.0 522.0L933.0 519.0L934.0 516.2L935.0 513.5L936.0 511.0L937.0 508.6L938.0 506.5L939.0 504.5L940.0 502.7L941.0 501.1L942.0 499.7L943.0 498.5L944.0 497.5L945.0 496.7L946.0 496.2L947.0 495.8L948.0 495.6L949.0 495.6L950.0 495.9L951.0 496.3L952.0 497.0L953.0 497.8L954.0 498.9L955.0 500.2L956.0 501.6L957.0 503.3L958.0 505.1L959.0 507.2L960.0 509.4L961.0 511.8L962.0 514.3L963.0 517.1L964.0 520.0L965.0 523.0L966.0 526.2L967.0 529.6L968.0 533.1L969.0 536.7L970.0 540.4L971.0 544.2L972.0 548.2L973.0 552.2L974.0 556.4L975.0 560.6L976.0 564.8L977.0 569.2L978.0 573.6L979.0 578.0L980.0 582.4L981.0 586.9L982.0 591.4L983.0 595.9L984.0 600.4L985.0 604.9L986.0 609.3L987.0 613.8L988.0 618.1L989.0 622.4L990.0 626.7L991.0 630.9L992.0 635.0L993.0 639.0L994.0 642.9L995.0 646.7L996.0 650.4L997.0 654.0L998.0 657.4L999.0 660.7L1000.0 663.9L1001.0 666.9L1002.0 669.8L1003.0 672.4L1004.0 675.0L1005.0 677.3L1006.0 679.5L1007.0 681.4L1008.0 683.2L1009.0 684.8L1010.0 686.2L1011.0 687.4L1012.0 688.4L1013.0 689.2L1014.0 689.8L1015.0 690.2L1016.0 690.4L1017.0 690.4L1018.0 690.1L1019.0 689.7L1020.0 689.0L1021.0 688.2L1022.0 687.1L1023.0 685.9L1024.0 684.4L1025.0 682.8L1026.0 680.9L1027.0 678.9L1028.0 676.7L1029.0 674.3L1030.0 671.7L1031.0 669.0L1032.0 666.1L1033.0 663.0L1034.0 659.8L1035.0 656.5L1036.0 653.0L1037.0 649.4L1038.0 645.7L1039.0 641.9L1040.0 637.9L1041.0 633.9L1042.0 629.7L1043.0 625.5L1044.0 621.3L1045.0 616.9L1046.0 612.5L1047.0 608.1L1048.0 603.7L1049.0 599.2L1050.0 594.7L1051.0 590.2L1052.0 585.7L1053.0 581.2L1054.0 576.8L1055.0 572.4L1056.0 568.0L1057.0 563.7L1058.0 559.4L1059.0 555.2L1060.0 551.1L1061.0 547.1L1062.0 543.2L1063.0 539.4L1064.0 535.7L1065.0 532.1L1066.0 528.7L1067.0 525.3L1068.0 522.2L1069.0 519.2L1070.0 516.3L1071.0 513.6L1072.0 511.1L1073.0 508.8L1074.0 506.6L1075.0 504.6L1076.0 502.8L1077.0 501.2L1078.0 499.8L1079.0 498.6L1080.0 497.6L1081.0 496.8L1082.0 496.2L1083.0 495.8L1084.0 495.6L1085.0 495.6L1086.0 495.9L1087.0 496.3L1088.0 496.9L1089.0 497.8L1090.0 498.8L1091.0 500.1L1092.0 501.5L1093.0 503.2L1094.0 505.0L1095.0 507.1L1096.0 509.3L1097.0 511.7L1098.0 514.2L1099.0 516.9L1100.0 519.8L1101.0 522.9L1102.0 526.1L1103.0 529.4L1104.0 532.9L1105.0 536.5L1106.0 540.2L1107.0 544.1L1108.0 548.0L1109.0 552.0L1110.0 556.2L1111.0 560.4L1112.0 564.6L1113.0 569.0L1114.0 573.3L1115.0 577.8L1116.0 582.2L1117.0 586.7L1118.0 591.2L1119.0 595.7L1120.0 600.2L1121.0 604.7"/>
<path stroke="#2a8ee2" stroke-width="1.5" d="M30.0 616.7L31.0 613.6L32.0 591.7L33.0 585.0L34.0 578.8L35.0 575.3L36.0 572.0L37.0 569.8L38.0 568.7L39.0 567.6L40.0 566.8L41.0 566.2L42.0 566.0L43.0 565.9L44.0 565.9L45.0 565.9L46.0 565.8L47.0 566.0L48.0 566.5L49.0 567.1L50.0 567.8L51.0 568.6L52.0 569.5L53.0 570.5L54.0 571.6L55.0 572.8L56.0 574.1L57.0 575.5L58.0 576.9L59.0 578.5L60.0 580.2L61.0 581.9L62.0 583.7L63.0 585.6L64.0 587.5L65.0 589.5L66.0 591.5L67.0 593.6L68.0 595.8L69.0 597.3L70.0 599.5L71.0 601.8L72.0 604.1L73.0 606.4L74.0 608.7L75.0 611.0L76.0 613.3L77.0 615.6L78.0 617.9L79.0 620.1L80.0 622.4L81.0 624.6L82.0 626.8L83.0 628.9L84.0 631.0L85.0 633.0L86.0 634.9L87.0 636.8L88.0 638.5L89.0 640.2L90.0 641.9L91.0 643.4L92.0 644.8L93.0 646.1L94.0 647.3L95.0 648.5L96.0 649.5L97.0 650.3L98.0 651.1L99.0 651.7L100.0 652.2L101.0 652.6L102.0 652.8L103.0 652.9L104.0 652.8L105.0 652.6L106.0 652.3L107.0 651.8L108.0 651.2L109.0 650.5L110.0 649.6L111.0 648.6L112.0 647.4L113.0 646.1L114.0 644.7L115.0 643.1L116.0 641.4L117.0 639.5L118.0 637.6L119.0 634.9L120.0 632.7L121.0 630.3L122.0 627.8L123.0 625.3L124.0 622.6L125.0 619.8L126.0 617.0L127.0 614.1L128.0 611.1L129.0 608.1L130.0 605.0L131.0 601.8L132.0 598.6L133.0 595.4L134.0 592.1L135.0 588.8L136.0 585.5L137.0 582.2L138.0 578.9L139.0 575.5L140.0 572.3L141.0 569.0L142.0 565.7L143.0 562.5L144.0 559.4L145.0 556.3L146.0 553.2L147.0 550.3L148.0 547.3L149.0 544.5L150.0 541.8L151.0 539.1L152.0 536.6L153.0 534.2L154.0 531.8L155.0 529.6L156.0 527.5L157.0 525.3L158.0 523.5L159.0 521.9L160.0 520.4L161.0 519.1L162.0 517.9L163.0 516.9L164.0 516.1L165.0 515.4L166.0 514.9L167.0 514.5L168.0 514.3L169.0 514.3L170.0 514.5L171.0 514.8L172.0 515.3L173.0 515.9L174.0 516.8L175.0 517.8L176.0 519.0L177.0 520.3L178.0 521.9L179.0 523.6L180.0 525.4L181.0 527.5L182.0 529.6L183.0 532.0L184.0 534.4L185.0 537.0L186.0 539.7L187.0 542.6L188.0 546.2L189.0 549.3L190.0 552.5L191.0 555.8L192.0 559.2L193.0 562.7L194.0 566.3L195.0 569.9L196.0 573.6L197.0 577.3L198.0 581.2L199.0 585.0L200.0 588.9L201.0 592.8L202.0 596.7L203.0 600.6L204.0 604.5L205.0 608.4L206.0 612.3L207.0 616.1L208.0 619.9L209.0 623.7L210.0 627.4L211.0 631.0L212.0 634.6L213.0 638.1L214.0 641.5L215.0 644.8L216.0 648.0L217.0 651.5L218.0 654.5L219.0 657.3L220.0 660.0L221.0 662.6L222.0 665.0L223.0 667.2L224.0 669.4L225.0 671.3L226.0 673.1L227.0 674.7L228.0 676.2L229.0 677.5L230.0 678.6L231.0 679.5L232.0 680.2L233.0 680.8L234.0 681.1L235.0 681.3L236.0 681.3L237.0 681.1L238.0 680.7L239.0 680.1L240.0 679.4L241.0 678.4L242.0 677.3L243.0 676.0L244.0 674.4L245.0 672.8L246.0 670.9L247.0 668.9L248.0 666.7L249.0 664.3L250.0 661.8L251.0 659.1L252.0 656.2L253.0 653.2L254.0 649.6L255.0 646.4L256.0 643.0L257.0 639.5L258.0 635.9L259.0 632.2L260.0 628.4L261.0 624.6L262.0 620.6L263.0 616.6L264.0 612.6L265.0 608.5L266.0 604.3L267.0 600.2L268.0 596.0L269.0 591.8L270.0 587.5L271.0 583.3L272.0 579.1L273.0 575.0L274.0 570.8L275.0 566.7L276.0 562.7L277.0 558.7L278.0 554.8L279.0 550.9L280.0 547.2L281.0 543.5L282.0 539.9L283.0 536.5L284.0 533.1L285.0 529.9L286.0 526.9L287.0 523.9L288.0 520.7L289.0 518.1L290.0 515.7L291.0 513.4L292.0 511.2L293.0 509.3L294.0 507.5L295.0 505.9L296.0 504.5L297.0 503.3L298.0 502.2L299.0 501.4L300.0 500.7L301.0 500.3L302.0 500.0L303.0 500.0L304.0 500.1L305.0 500.5L306.0 501.0L307.0 501.7L308.0 502.7L309.0 503.8L310.0 505.1L311.0 506.6L312.0 508.3L313.0 510.2L314.0 512.3L315.0 514.5L316.0 516.9L317.0 519.5L318.0 522.2L319.0 525.1L320.0 528.1L321.0 531.3L322.0 534.6L323.0 538.0L324.0 541.5L325.0 545.2L326.0 549.0L327.0 552.8L328.0 556.8L329.0 560.8L330.0 564.9L331.0 569.1L332.0 573.3L333.0 577.6L334.0 581.9L335.0 586.2L336.0 590.6L337.0 594.9L338.0 599.3L339.0 603.6L340.0 607.9L341.0 612.2L342.0 616.5L343.0 621.3L344.0 625.5L345.0 629.6L346.0 633.6L347.0 637.5L348.0 641.3L349.0 645.0L350.0 648.6L351.0 652.1L352.0 655.5L353.0 658.8L354.0 661.9L355.0 664.8L356.0 667.6L357.0 670.3L358.0 672.8L359.0 675.1L360.0 677.2L361.0 679.2L362.0 681.0L363.0 682.6L364.0 684.0L365.0 685.2L366.0 686.2L367.0 687.0L368.0 687.6L369.0 688.1L370.0 688.3L371.0 688.3L372.0 688.1L373.0 687.7L374.0 687.1L375.0 686.3L376.0 685.3L377.0 684.1L378.0 682.7L379.0 681.1L380.0 679.3L381.0 677.3L382.0 675.2L383.0 672.9L384.0 670.4L385.0 667.7L386.0 664.9L387.0 661.9L388.0 658.8L389.0 655.6L390.0 652.2L391.0 648.6L392.0 645.0L393.0 641.2L394.0 637.4L395.0 633.4L396.0 629.4L397.0 625.2L398.0 621.1L399.0 616.8L400.0 612.5L401.0 608.1L402.0 603.7L403.0 599.3L404.0 594.9L405.0 590.5L406.0 586.0L407.0 581.6L408.0 577.2L409.0 572.9L410.0 568.6L411.0 564.3L412.0 559.5L413.0 555.4L414.0 551.3L415.0 547.4L416.0 543.5L417.0 539.7L418.0 536.1L419.0 532.6L420.0 529.2L421.0 525.9L422.0 522.8L423.0 519.8L424.0 517.0L425.0 514.3L426.0 511.9L427.0 509.5L428.0 507.4L429.0 505.4L430.0 503.7L431.0 502.1L432.0 500.7L433.0 499.5L434.0 498.5L435.0 497.7L436.0 497.1L437.0 496.8L438.0 496.6L439.0 496.6L440.0 496.9L441.0 497.3L442.0 497.9L443.0 498.8L444.0 499.8L445.0 501.1L446.0 502.5L447.0 504.2L448.0 506.0L449.0 508.0L450.0 510.2L451.0 512.6L452.0 515.1L453.0 517.9L454.0 520.7L455.0 523.8L456.0 526.9L457.0 530.3L458.0 533.7L459.0 537.3L460.0 541.0L461.0 544.8L462.0 548.7L463.0 552.7L464.0 556.8L465.0 561.0L466.0 565.2L467.0 569.5L468.0 573.9L469.0 578.3L470.0 582.7L471.0 587.2L472.0 591.6L473.0 596.1L474.0 600.6L475.0 605.0L476.0 609.4L477.0 613.8L478.0 618.1L479.0 622.4L480.0 626.7L481.0 630.8L482.0 634.9L483.0 638.9L484.0 642.8L485.0 646.6L486.0 650.2L487.0 653.8L488.0 657.2L489.0 660.5L490.0 663.6L491.0 666.6L492.0 669.5L493.0 672.1L494.0 674.6L495.0 677.0L496.0 679.1L497.0 681.1L498.0 682.9L499.0 684.5L500.0 685.9L501.0 687.1L502.0 688.1L503.0 688.9L504.0 689.4L505.0 689.8L506.0 690.0L507.0 690.0L508.0 689.7L509.0 689.3L510.0 688.7L511.0 687.8L512.0 686.8L513.0 685.5L514.0 684.1L515.0 682.6L516.0 680.8L517.0 678.8L518.0 676.6L519.0 674.2L520.0 671.6L521.0 668.9L522.0 666.0L523.0 662.8L524.0 659.3L525.0 655.9L526.0 652.5L527.0 648.9L528.0 645.2L529.0 641.6L530.0 637.7L531.0 633.7L532.0 629.6L533.0 625.4L534.0 621.1L535.0 616.7L536.0 612.4L537.0 607.9L538.0 603.5L539.0 599.0L540.0 594.5L541.0 590.0L542.0 585.5L543.0 581.0L544.0 576.6L545.0 572.2L546.0 567.8L547.0 563.5L548.0 559.2L549.0 555.0L550.0 550.9L551.0 546.4L552.0 542.5L553.0 538.7L554.0 535.0L555.0 531.4L556.0 528.0L557.0 524.7L558.0 521.6L559.0 518.6L560.0 515.8L561.0 513.1L562.0 510.6L563.0 508.7L564.0 506.5L565.0 504.5L566.0 502.7L567.0 501.1L568.0 499.7L569.0 498.5L570.0 497.5L571.0 496.7L572.0 496.1L573.0 495.7L574.0 495.6L575.0 495.7L576.0 495.9L577.0 496.4L578.0 497.1L579.0 498.0L580.0 499.1L581.0 500.4L582.0 501.8L583.0 503.5L584.0 505.4L585.0 507.5L586.0 509.7L587.0 512.1L588.0 514.7L589.0 517.5L590.0 520.4L591.0 523.5L592.0 526.7L593.0 530.1L594.0 533.6L595.0 537.2L596.0 540.9L597.0 544.8L598.0 548.7L599.0 552.8L600.0 556.9L601.0 561.1L602.0 565.4L603.0 569.8L604.0 574.2L605.0 578.6L606.0 583.1L607.0 587.5L608.0 592.0L609.0 596.5L610.0 601.0L611.0 605.5L612.0 610.0L613.0 614.4L614.0 618.7L615.0 623.0L616.0 627.3L617.0 631.5L618.0 635.5L619.0 639.5L620.0 643.4L621.0 647.2L622.0 650.9L623.0 654.5L624.0 657.9L625.0 661.2L626.0 664.3L627.0 667.3L628.0 670.1L629.0 672.8L630.0 675.3L631.0 677.6L632.0 679.7L633.0 681.7L634.0 683.5L635.0 685.0L636.0 686.4L637.0 687.6L638.0 688.6L639.0 689.3L640.0 689.9L641.0 690.3L642.0 690.4L643.0 690.3L644.0 690.1L645.0 689.6L646.0 688.9L647.0 688.1L648.0 687.0L649.0 685.7L650.0 684.2L651.0 682.5L652.0 680.7L653.0 678.6L654.0 676.4L655.0 673.9L656.0 671.4L657.0 668.6L658.0 665.7L659.0 662.6L660.0 659.4L661.0 656.0L662.0 652.5L663.0 648.9L664.0 645.2L665.0 641.3L666.0 637.4L667.0 633.3L668.0 629.2L669.0 625.0L670.0 620.7L671.0 616.3L672.0 611.9L673.0 607.5L674.0 603.0L675.0 598.6L676.0 594.1L677.0 589.6L678.0 585.1L679.0 580.6L680.0 576.2L681.0 571.7L682.0 567.4L683.0 563.1L684.0 558.8L685.0 554.6L686.0 550.6L687.0 546.6L688.0 542.6L689.0 538.9L690.0 535.2L691.0 531.6L692.0 528.2L693.0 524.9L694.0 521.8L695.0 518.8L696.0 515.9L697.0 513.3L698.0 510.8L699.0 508.4L700.0 506.3L701.0 504.3L702.0 502.6L703.0 501.0L704.0 499.6L705.0 498.4L706.0 497.5L707.0 496.7L708.0 496.1L709.0 495.8L710.0 495.6L711.0 495.6L712.0 495.9L713.0 496.4L714.0 497.0L715.0 497.9L716.0 499.0L717.0 500.3L718.0 501.8L719.0 503.4L720.0 505.3L721.0 507.4L722.0 509.6L723.0 512.0L724.0 514.6L725.0 517.3L726.0 520.2L727.0 523.3L728.0 526.5L729.0 529.9L730.0 533.4L731.0 537.0L732.0 540.7L733.0 544.6L734.0 548.5L735.0 552.6L736.0 556.7L737.0 560.9L738.0 565.2L739.0 569.6L740.0 573.9L741.0 578.4L742.0 582.8L743.0 587.3L744.0 591.8L745.0 596.3L746.0 600.8L747.0 605.3L748.0 609.7L749.0 614.1L750.0 618.5L751.0 622.8L752.0 627.1L753.0 631.2L754.0 635.3L755.0 639.3L756.0 643.3L757.0 647.1L758.0 650.7L759.0 654.3L760.0 657.7L761.0 661.0L762.0 664.2L763.0 667.2L764.0 670.0L765.0 672.7L766.0 675.2L767.0 677.5L768.0 679.6L769.0 681.6L770.0 683.4L771.0 685.0L772.0 686.3L773.0 687.5L774.0 688.5L775.0 689.3L776.0 689.9L777.0 690.2L778.0 690.4L779.0 690.4L780.0 690.1L781.0 689.6L782.0 689.0L783.0 688.1L784.0 687.0L785.0 685.7L786.0 684.3L787.0 682.6L788.0 680.7L789.0 678.7L790.0 676.5L791.0 674.1L792.0 671.5L793.0 668.7L794.0 665.8L795.0 662.8L796.0 659.6L797.0 656.2L798.0 652.7L799.0 649.1L800.0 645.4L801.0 641.5L802.0 637.6L803.0 633.5L804.0 629.4L805.0 625.2L806.0 620.9L807.0 616.6L808.0 612.2L809.0 607.7L810.0 603.3L811.0 598.8L812.0 594.3L813.0 589.8L814.0 585.3L815.0 580.8L816.0 576.4L817.0 572.0L818.0 567.6L819.0 563.3L820.0 559.0L821.0 554.9L822.0 550.8L823.0 546.7L824.0 542.8L825.0 539.0L826.0 535.4L827.0 531.8L828.0 528.4L829.0 525.1L830.0 521.9L831.0 518.9L832.0 516.1L833.0 513.4L834.0 510.9L835.0 508.6L836.0 506.4L837.0 504.4L838.0 502.7L839.0 501.1L840.0 499.7L841.0 498.5L842.0 497.5L843.0 496.7L844.0 496.1L845.0 495.8L846.0 495.6L847.0 495.6L848.0 495.9L849.0 496.3L850.0 497.0L851.0 497.9L852.0 498.9L853.0 500.2L854.0 501.7L855.0 503.3L856.0 505.2L857.0 507.2L858.0 509.5L859.0 511.9L860.0 514.4L861.0 517.2L862.0 520.1L863.0 523.2L864.0 526.4L865.0 529.7L866.0 533.2L867.0 536.8L868.0 540.5L869.0 544.4L870.0 548.3L871.0 552.4L872.0 556.5L873.0 560.7L874.0 565.0L875.0 569.3L876.0 573.7L877.0 578.2L878.0 582.6L879.0 587.1L880.0 591.6L881.0 596.1L882.0 600.6L883.0 605.1L884.0 609.5L885.0 613.9L886.0 618.3L887.0 622.6L888.0 626.9L889.0 631.0L890.0 635.1L891.0 639.2L892.0 643.1L893.0 646.9L894.0 650.6L895.0 654.1L896.0 657.6L897.0 660.9L898.0 664.0L899.0 667.0L900.0 669.9L901.0 672.5L902.0 675.1L903.0 677.4L904.0 679.5L905.0 681.5L906.0 683.3L907.0 684.9L908.0 686.3L909.0 687.5L910.0 688.5L911.0 689.3L912.0 689.8L913.0 690.2L914.0 690.4L915.0 690.4L916.0 690.1L917.0 689.7L918.0 689.0L919.0 688.1L920.0 687.1L921.0 685.8L922.0 684.4L923.0 682.7L924.0 680.8L925.0 678.8L926.0 676.6L927.0 674.2L928.0 671.6L929.0 668.9L930.0 666.0L931.0 662.9L932.0 659.7L933.0 656.4L934.0 652.9L935.0 649.3L936.0 645.5L937.0 641.7L938.0 637.8L939.0 633.7L940.0 629.6L941.0 625.4L942.0 621.1L943.0 616.8L944.0 612.4L945.0 608.0L946.0 603.5L947.0 599.0L948.0 594.5L949.0 590.0L950.0 585.5L951.0 581.1L952.0 576.6L953.0 572.2L954.0 567.8L955.0 563.5L956.0 559.2L957.0 555.1L958.0 551.0L959.0 546.9L960.0 543.0L961.0 539.2L962.0 535.5L963.0 532.0L964.0 528.5L965.0 525.2L966.0 522.1L967.0 519.1L968.0 516.2L969.0 513.5L970.0 511.0L971.0 508.7L972.0 506.5L973.0 504.5L974.0 502.7L975.0 501.1L976.0 499.7L977.0 498.5L978.0 497.5L979.0 496.8L980.0 496.2L981.0 495.8L982.0 495.6L983.0 495.6L984.0 495.9L985.0 496.3L986.0 497.0L987.0 497.8L988.0 498.9L989.0 500.1L990.0 501.6L991.0 503.3L992.0 505.1L993.0 507.1L994.0 509.4L995.0 511.7L996.0 514.3L997.0 517.0L998.0 519.9L999.0 523.0L1000.0 526.2L1001.0 529.5L1002.0 533.0L1003.0 536.6L1004.0 540.4L1005.0 544.2L1006.0 548.1L1007.0 552.2L1008.0 556.3L1009.0 560.5L1010.0 564.8L1011.0 569.1L1012.0 573.5L1013.0 577.9L1014.0 582.4L1015.0 586.9L1016.0 591.4L1017.0 595.9L1018.0 600.4L1019.0 604.8L1020.0 609.3L1021.0 613.7L1022.0 618.1L1023.0 622.4L1024.0 626.7L1025.0 630.8L1026.0 634.9L1027.0 639.0L1028.0 642.9L1029.0 646.7L1030.0 650.4L1031.0 653.9L1032.0 657.4L1033.0 660.7L1034.0 663.9L1035.0 666.9L1036.0 669.7L1037.0 672.4L1038.0 674.9L1039.0 677.3L1040.0 679.4L1041.0 681.4L1042.0 683.2L1043.0 684.8L1044.0 686.2L1045.0 687.4L1046.0 688.4L1047.0 689.2L1048.0 689.8L1049.0 690.2L1050.0 690.4L1051.0 690.4L1052.0 690.1L1053.0 689.7L1054.0 689.0L1055.0 688.2L1056.0 687.1L1057.0 685.9L1058.0 684.4L1059.0 682.8L1060.0 680.9L1061.0 678.9L1062.0 676.7L1063.0 674.3L1064.0 671.8L1065.0 669.0L1066.0 666.1L1067.0 663.1L1068.0 659.9L1069.0 656.5L1070.0 653.1L1071.0 649.5L1072.0 645.7L1073.0 641.9L1074.0 638.0L1075.0 633.9L1076.0 629.8L1077.0 625.6L1078.0 621.3L1079.0 617.0L1080.0 612.6L1081.0 608.2L1082.0 603.7L1083.0 599.2L1084.0 594.7L1085.0 590.2L1086.0 585.8L1087.0 581.3L1088.0 576.8L1089.0 572.4L1090.0 568.0L1091.0 563.7L1092.0 559.5L1093.0 555.3L1094.0 551.2L1095.0 547.1L1096.0 543.2L1097.0 539.4L1098.0 535.7L1099.0 532.1L1100.0 528.7L1101.0 525.4L1102.0 522.2L1103.0 519.2L1104.0 516.3L1105.0 513.7L1106.0 511.1L1107.0 508.8L1108.0 506.6L1109.0 504.6L1110.0 502.8L1111.0 501.2L1112.0 499.8L1113.0 498.6L1114.0 497.6L1115.0 496.8L1116.0 496.2L1117.0 495.8L1118.0 495.6L1119.0 495.6L1120.0 495.9L1121.0 496.3"/>
</g>
<path d="M3 450.5H33" stroke="#f7e052" stroke-width="1.6" fill="none"/>
<text x="34.6" y="453.1" class="leg">ids</text>
<path d="M64 450.5H94" stroke="#2a8ee2" stroke-width="1.6" fill="none"/>
<text x="95.6" y="453.1" class="leg">iqs</text>
<text x="25.2" y="695.3" class="tk" text-anchor="end">-30</text>
<text x="25.2" y="662.3" class="tk" text-anchor="end">-20</text>
<text x="25.2" y="630.3" class="tk" text-anchor="end">-10</text>
<text x="25.2" y="597.3" class="tk" text-anchor="end">0</text>
<text x="25.2" y="564.3" class="tk" text-anchor="end">10</text>
<text x="25.2" y="532.3" class="tk" text-anchor="end">20</text>
<text x="25.2" y="499.3" class="tk" text-anchor="end">30</text>
</svg>
<svg class="plot" style="top:725px" width="1141" height="291" viewBox="0 725 1141 291">
<rect x="0" y="725" width="1141" height="1" fill="#d4d4d4"/>
<rect x="0" y="748" width="1141" height="1" fill="#d4d4d4"/>
<rect x="30" y="758" width="1092" height="229" fill="#111111"/>
<g shape-rendering="crispEdges" fill="#444444">
<rect x="121" y="758" width="1" height="228"/>
<rect x="211" y="758" width="1" height="228"/>
<rect x="302" y="758" width="1" height="228"/>
<rect x="393" y="758" width="1" height="228"/>
<rect x="484" y="758" width="1" height="228"/>
<rect x="574" y="758" width="1" height="228"/>
<rect x="665" y="758" width="1" height="228"/>
<rect x="756" y="758" width="1" height="228"/>
<rect x="846" y="758" width="1" height="228"/>
<rect x="937" y="758" width="1" height="228"/>
<rect x="1028" y="758" width="1" height="228"/>
<rect x="1118" y="758" width="1" height="228"/>
<rect x="30" y="977" width="1091" height="1"/>
<rect x="30" y="928" width="1091" height="1"/>
<rect x="30" y="879" width="1091" height="1"/>
<rect x="30" y="830" width="1091" height="1"/>
<rect x="30" y="781" width="1091" height="1"/>
</g>
<g shape-rendering="crispEdges" fill="#d8d8d8">
<rect x="30" y="758" width="1092" height="1"/>
<rect x="30" y="986" width="1092" height="1"/>
<rect x="30" y="758" width="1" height="229"/>
<rect x="1121" y="758" width="1" height="229"/>
<rect x="30" y="977" width="6" height="1"/>
<rect x="1115" y="977" width="7" height="1"/>
<rect x="30" y="928" width="6" height="1"/>
<rect x="1115" y="928" width="7" height="1"/>
<rect x="30" y="879" width="6" height="1"/>
<rect x="1115" y="879" width="7" height="1"/>
<rect x="30" y="830" width="6" height="1"/>
<rect x="1115" y="830" width="7" height="1"/>
<rect x="30" y="781" width="6" height="1"/>
<rect x="1115" y="781" width="7" height="1"/>
<rect x="30" y="952" width="4" height="1"/>
<rect x="1118" y="952" width="4" height="1"/>
<rect x="30" y="903" width="4" height="1"/>
<rect x="1118" y="903" width="4" height="1"/>
<rect x="30" y="854" width="4" height="1"/>
<rect x="1118" y="854" width="4" height="1"/>
<rect x="30" y="805" width="4" height="1"/>
<rect x="1118" y="805" width="4" height="1"/>
<rect x="30" y="758" width="1" height="7"/>
<rect x="30" y="980" width="1" height="7"/>
<rect x="48" y="758" width="1" height="4"/>
<rect x="48" y="983" width="1" height="4"/>
<rect x="66" y="758" width="1" height="4"/>
<rect x="66" y="983" width="1" height="4"/>
<rect x="84" y="758" width="1" height="4"/>
<rect x="84" y="983" width="1" height="4"/>
<rect x="103" y="758" width="1" height="4"/>
<rect x="103" y="983" width="1" height="4"/>
<rect x="121" y="758" width="1" height="7"/>
<rect x="121" y="980" width="1" height="7"/>
<rect x="139" y="758" width="1" height="4"/>
<rect x="139" y="983" width="1" height="4"/>
<rect x="157" y="758" width="1" height="4"/>
<rect x="157" y="983" width="1" height="4"/>
<rect x="175" y="758" width="1" height="4"/>
<rect x="175" y="983" width="1" height="4"/>
<rect x="193" y="758" width="1" height="4"/>
<rect x="193" y="983" width="1" height="4"/>
<rect x="211" y="758" width="1" height="7"/>
<rect x="211" y="980" width="1" height="7"/>
<rect x="230" y="758" width="1" height="4"/>
<rect x="230" y="983" width="1" height="4"/>
<rect x="248" y="758" width="1" height="4"/>
<rect x="248" y="983" width="1" height="4"/>
<rect x="266" y="758" width="1" height="4"/>
<rect x="266" y="983" width="1" height="4"/>
<rect x="284" y="758" width="1" height="4"/>
<rect x="284" y="983" width="1" height="4"/>
<rect x="302" y="758" width="1" height="7"/>
<rect x="302" y="980" width="1" height="7"/>
<rect x="320" y="758" width="1" height="4"/>
<rect x="320" y="983" width="1" height="4"/>
<rect x="338" y="758" width="1" height="4"/>
<rect x="338" y="983" width="1" height="4"/>
<rect x="357" y="758" width="1" height="4"/>
<rect x="357" y="983" width="1" height="4"/>
<rect x="375" y="758" width="1" height="4"/>
<rect x="375" y="983" width="1" height="4"/>
<rect x="393" y="758" width="1" height="7"/>
<rect x="393" y="980" width="1" height="7"/>
<rect x="411" y="758" width="1" height="4"/>
<rect x="411" y="983" width="1" height="4"/>
<rect x="429" y="758" width="1" height="4"/>
<rect x="429" y="983" width="1" height="4"/>
<rect x="447" y="758" width="1" height="4"/>
<rect x="447" y="983" width="1" height="4"/>
<rect x="465" y="758" width="1" height="4"/>
<rect x="465" y="983" width="1" height="4"/>
<rect x="484" y="758" width="1" height="7"/>
<rect x="484" y="980" width="1" height="7"/>
<rect x="502" y="758" width="1" height="4"/>
<rect x="502" y="983" width="1" height="4"/>
<rect x="520" y="758" width="1" height="4"/>
<rect x="520" y="983" width="1" height="4"/>
<rect x="538" y="758" width="1" height="4"/>
<rect x="538" y="983" width="1" height="4"/>
<rect x="556" y="758" width="1" height="4"/>
<rect x="556" y="983" width="1" height="4"/>
<rect x="574" y="758" width="1" height="7"/>
<rect x="574" y="980" width="1" height="7"/>
<rect x="592" y="758" width="1" height="4"/>
<rect x="592" y="983" width="1" height="4"/>
<rect x="610" y="758" width="1" height="4"/>
<rect x="610" y="983" width="1" height="4"/>
<rect x="629" y="758" width="1" height="4"/>
<rect x="629" y="983" width="1" height="4"/>
<rect x="647" y="758" width="1" height="4"/>
<rect x="647" y="983" width="1" height="4"/>
<rect x="665" y="758" width="1" height="7"/>
<rect x="665" y="980" width="1" height="7"/>
<rect x="683" y="758" width="1" height="4"/>
<rect x="683" y="983" width="1" height="4"/>
<rect x="701" y="758" width="1" height="4"/>
<rect x="701" y="983" width="1" height="4"/>
<rect x="719" y="758" width="1" height="4"/>
<rect x="719" y="983" width="1" height="4"/>
<rect x="737" y="758" width="1" height="4"/>
<rect x="737" y="983" width="1" height="4"/>
<rect x="756" y="758" width="1" height="7"/>
<rect x="756" y="980" width="1" height="7"/>
<rect x="774" y="758" width="1" height="4"/>
<rect x="774" y="983" width="1" height="4"/>
<rect x="792" y="758" width="1" height="4"/>
<rect x="792" y="983" width="1" height="4"/>
<rect x="810" y="758" width="1" height="4"/>
<rect x="810" y="983" width="1" height="4"/>
<rect x="828" y="758" width="1" height="4"/>
<rect x="828" y="983" width="1" height="4"/>
<rect x="846" y="758" width="1" height="7"/>
<rect x="846" y="980" width="1" height="7"/>
<rect x="864" y="758" width="1" height="4"/>
<rect x="864" y="983" width="1" height="4"/>
<rect x="883" y="758" width="1" height="4"/>
<rect x="883" y="983" width="1" height="4"/>
<rect x="901" y="758" width="1" height="4"/>
<rect x="901" y="983" width="1" height="4"/>
<rect x="919" y="758" width="1" height="4"/>
<rect x="919" y="983" width="1" height="4"/>
<rect x="937" y="758" width="1" height="7"/>
<rect x="937" y="980" width="1" height="7"/>
<rect x="955" y="758" width="1" height="4"/>
<rect x="955" y="983" width="1" height="4"/>
<rect x="973" y="758" width="1" height="4"/>
<rect x="973" y="983" width="1" height="4"/>
<rect x="991" y="758" width="1" height="4"/>
<rect x="991" y="983" width="1" height="4"/>
<rect x="1010" y="758" width="1" height="4"/>
<rect x="1010" y="983" width="1" height="4"/>
<rect x="1028" y="758" width="1" height="7"/>
<rect x="1028" y="980" width="1" height="7"/>
<rect x="1046" y="758" width="1" height="4"/>
<rect x="1046" y="983" width="1" height="4"/>
<rect x="1064" y="758" width="1" height="4"/>
<rect x="1064" y="983" width="1" height="4"/>
<rect x="1082" y="758" width="1" height="4"/>
<rect x="1082" y="983" width="1" height="4"/>
<rect x="1100" y="758" width="1" height="4"/>
<rect x="1100" y="983" width="1" height="4"/>
<rect x="1118" y="758" width="1" height="7"/>
<rect x="1118" y="980" width="1" height="7"/>
</g>
<clipPath id="cp2"><rect x="30" y="758" width="1092" height="229"/></clipPath>
<g clip-path="url(#cp2)" fill="none" stroke-linejoin="round" stroke-linecap="butt">
<path stroke="#f7e052" stroke-width="2.1" stroke-linejoin="round" d="M30.0 928.3H31.0V927.3H32.0V926.3H33.0V925.3H34.0V924.3H35.0H36.0V923.3H37.0H38.0V922.3H39.0H40.0H41.0H42.0V921.3H43.0H44.0H45.0H46.0V920.3H47.0H48.0H49.0H50.0H51.0H52.0H53.0H54.0H55.0H56.0H57.0H58.0H59.0H60.0H61.0H62.0H63.0H64.0H65.0H66.0H67.0H68.0H69.0V919.3H70.0H71.0H72.0H73.0H74.0H75.0H76.0H77.0H78.0H79.0H80.0H81.0H82.0H83.0H84.0H85.0H86.0H87.0H88.0H89.0H90.0H91.0H92.0H93.0H94.0H95.0H96.0H97.0H98.0H99.0H100.0H101.0H102.0H103.0H104.0H105.0H106.0H107.0H108.0H109.0H110.0H111.0H112.0H113.0H114.0H115.0H116.0H117.0H118.0H119.0V920.3H120.0H121.0H122.0H123.0H124.0H125.0H126.0H127.0H128.0H129.0H130.0H131.0H132.0H133.0H134.0H135.0H136.0H137.0H138.0H139.0H140.0H141.0H142.0H143.0H144.0H145.0H146.0H147.0H148.0H149.0H150.0H151.0H152.0H153.0H154.0H155.0H156.0H157.0V921.3H158.0H159.0H160.0H161.0H162.0H163.0H164.0H165.0H166.0H167.0H168.0H169.0H170.0H171.0H172.0H173.0H174.0H175.0H176.0H177.0H178.0H179.0H180.0H181.0H182.0H183.0H184.0H185.0H186.0H187.0H188.0V922.3H189.0H190.0H191.0H192.0H193.0H194.0H195.0H196.0H197.0H198.0H199.0H200.0H201.0H202.0H203.0H204.0H205.0H206.0H207.0H208.0H209.0H210.0H211.0H212.0H213.0H214.0H215.0H216.0H217.0V923.3H218.0H219.0H220.0H221.0H222.0H223.0H224.0H225.0H226.0H227.0H228.0H229.0H230.0H231.0H232.0H233.0H234.0H235.0H236.0H237.0H238.0H239.0H240.0H241.0H242.0H243.0H244.0H245.0H246.0H247.0H248.0H249.0H250.0H251.0H252.0H253.0H254.0V924.3H255.0H256.0H257.0H258.0H259.0H260.0H261.0H262.0H263.0H264.0H265.0H266.0H267.0H268.0H269.0H270.0H271.0H272.0H273.0H274.0H275.0H276.0H277.0H278.0H279.0H280.0H281.0H282.0H283.0H284.0H285.0H286.0H287.0H288.0V925.3H289.0H290.0H291.0H292.0H293.0H294.0H295.0H296.0H297.0H298.0H299.0H300.0H301.0H302.0H303.0H304.0H305.0H306.0H307.0H308.0H309.0H310.0H311.0H312.0H313.0H314.0H315.0H316.0H317.0H318.0H319.0H320.0H321.0H322.0H323.0H324.0H325.0H326.0H327.0H328.0H329.0H330.0H331.0H332.0H333.0H334.0H335.0H336.0H337.0H338.0H339.0H340.0H341.0H342.0H343.0V926.3H344.0H345.0H346.0H347.0H348.0H349.0H350.0H351.0H352.0H353.0H354.0H355.0H356.0H357.0H358.0H359.0H360.0H361.0H362.0H363.0H364.0H365.0H366.0H367.0H368.0H369.0H370.0H371.0H372.0H373.0H374.0H375.0H376.0H377.0H378.0H379.0H380.0H381.0H382.0H383.0H384.0H385.0H386.0H387.0H388.0H389.0H390.0H391.0H392.0H393.0H394.0H395.0H396.0H397.0H398.0H399.0H400.0H401.0H402.0H403.0H404.0H405.0H406.0H407.0H408.0H409.0H410.0H411.0H412.0V927.3H413.0H414.0H415.0H416.0H417.0H418.0H419.0H420.0H421.0H422.0H423.0H424.0H425.0H426.0H427.0H428.0H429.0H430.0H431.0H432.0H433.0H434.0H435.0H436.0H437.0H438.0H439.0H440.0H441.0H442.0H443.0H444.0H445.0H446.0H447.0H448.0H449.0H450.0H451.0H452.0H453.0H454.0H455.0H456.0H457.0H458.0H459.0H460.0H461.0H462.0H463.0H464.0H465.0H466.0H467.0H468.0H469.0H470.0H471.0H472.0H473.0H474.0H475.0H476.0H477.0H478.0H479.0H480.0H481.0H482.0H483.0H484.0H485.0H486.0H487.0H488.0H489.0H490.0H491.0H492.0H493.0H494.0H495.0H496.0H497.0H498.0H499.0H500.0H501.0H502.0H503.0H504.0H505.0H506.0H507.0H508.0H509.0H510.0H511.0H512.0H513.0H514.0H515.0H516.0H517.0H518.0H519.0H520.0H521.0H522.0H523.0H524.0H525.0H526.0H527.0H528.0H529.0H530.0H531.0H532.0H533.0H534.0H535.0H536.0H537.0H538.0H539.0H540.0H541.0H542.0H543.0H544.0H545.0H546.0H547.0H548.0H549.0H550.0H551.0V928.3H552.0H553.0H554.0H555.0H556.0H557.0H558.0H559.0H560.0H561.0H562.0H563.0V927.3H564.0H565.0H566.0H567.0H568.0H569.0H570.0H571.0V928.3H572.0H573.0H574.0H575.0H576.0H577.0H578.0H579.0H580.0H581.0H582.0H583.0H584.0H585.0H586.0H587.0H588.0H589.0H590.0H591.0H592.0H593.0H594.0H595.0H596.0H597.0H598.0H599.0H600.0H601.0H602.0H603.0H604.0H605.0H606.0H607.0H608.0H609.0H610.0H611.0H612.0H613.0H614.0H615.0H616.0H617.0H618.0H619.0H620.0H621.0H622.0H623.0H624.0H625.0H626.0H627.0H628.0H629.0H630.0H631.0H632.0H633.0H634.0H635.0H636.0H637.0H638.0H639.0H640.0H641.0H642.0H643.0H644.0H645.0H646.0H647.0H648.0H649.0H650.0H651.0H652.0H653.0H654.0H655.0H656.0H657.0H658.0H659.0H660.0H661.0H662.0H663.0H664.0H665.0H666.0H667.0H668.0H669.0H670.0H671.0H672.0H673.0H674.0H675.0H676.0H677.0H678.0H679.0H680.0H681.0H682.0H683.0H684.0H685.0H686.0H687.0H688.0H689.0H690.0H691.0H692.0H693.0H694.0H695.0H696.0H697.0H698.0H699.0H700.0H701.0H702.0H703.0H704.0H705.0H706.0H707.0H708.0H709.0H710.0H711.0H712.0H713.0H714.0H715.0H716.0H717.0H718.0H719.0H720.0H721.0H722.0H723.0H724.0H725.0H726.0H727.0H728.0H729.0H730.0H731.0H732.0H733.0H734.0H735.0H736.0H737.0H738.0H739.0H740.0H741.0H742.0H743.0H744.0H745.0H746.0H747.0H748.0H749.0H750.0H751.0H752.0H753.0H754.0H755.0H756.0H757.0H758.0H759.0H760.0H761.0H762.0H763.0H764.0H765.0H766.0H767.0H768.0H769.0H770.0H771.0H772.0H773.0H774.0H775.0H776.0H777.0H778.0H779.0H780.0H781.0H782.0H783.0H784.0H785.0H786.0H787.0H788.0H789.0H790.0H791.0H792.0H793.0H794.0H795.0H796.0H797.0H798.0H799.0H800.0H801.0H802.0H803.0H804.0H805.0H806.0H807.0H808.0H809.0H810.0H811.0H812.0H813.0H814.0H815.0H816.0H817.0H818.0H819.0H820.0H821.0H822.0H823.0H824.0H825.0H826.0H827.0H828.0H829.0H830.0H831.0H832.0H833.0H834.0H835.0H836.0H837.0H838.0H839.0H840.0H841.0H842.0H843.0H844.0H845.0H846.0H847.0H848.0H849.0H850.0H851.0H852.0H853.0H854.0H855.0H856.0H857.0H858.0H859.0H860.0H861.0H862.0H863.0H864.0H865.0H866.0H867.0H868.0H869.0H870.0H871.0H872.0H873.0H874.0H875.0H876.0H877.0H878.0H879.0H880.0H881.0H882.0H883.0H884.0H885.0H886.0H887.0H888.0H889.0H890.0H891.0H892.0H893.0H894.0H895.0H896.0H897.0H898.0H899.0H900.0H901.0H902.0H903.0H904.0H905.0H906.0H907.0H908.0H909.0H910.0H911.0H912.0H913.0H914.0H915.0H916.0H917.0H918.0H919.0H920.0H921.0H922.0H923.0H924.0H925.0H926.0H927.0H928.0H929.0H930.0H931.0H932.0H933.0H934.0H935.0H936.0H937.0H938.0H939.0H940.0H941.0H942.0H943.0H944.0H945.0H946.0H947.0H948.0H949.0H950.0H951.0H952.0H953.0H954.0H955.0H956.0H957.0H958.0H959.0H960.0H961.0H962.0H963.0H964.0H965.0H966.0H967.0H968.0H969.0H970.0H971.0H972.0H973.0H974.0H975.0H976.0H977.0H978.0H979.0H980.0H981.0H982.0H983.0H984.0H985.0H986.0H987.0H988.0H989.0H990.0H991.0H992.0H993.0H994.0H995.0H996.0H997.0H998.0H999.0H1000.0H1001.0H1002.0H1003.0H1004.0H1005.0H1006.0H1007.0H1008.0H1009.0H1010.0H1011.0H1012.0H1013.0H1014.0H1015.0H1016.0H1017.0H1018.0H1019.0H1020.0H1021.0H1022.0H1023.0H1024.0H1025.0H1026.0H1027.0H1028.0H1029.0H1030.0H1031.0H1032.0H1033.0H1034.0H1035.0H1036.0H1037.0H1038.0H1039.0H1040.0H1041.0H1042.0H1043.0H1044.0H1045.0H1046.0H1047.0H1048.0H1049.0H1050.0H1051.0H1052.0H1053.0H1054.0H1055.0H1056.0H1057.0H1058.0H1059.0H1060.0H1061.0H1062.0H1063.0H1064.0H1065.0H1066.0H1067.0H1068.0H1069.0H1070.0H1071.0H1072.0H1073.0H1074.0H1075.0H1076.0H1077.0H1078.0H1079.0H1080.0H1081.0H1082.0H1083.0H1084.0H1085.0H1086.0H1087.0H1088.0H1089.0H1090.0H1091.0H1092.0H1093.0H1094.0H1095.0H1096.0H1097.0H1098.0H1099.0H1100.0H1101.0H1102.0H1103.0H1104.0H1105.0H1106.0H1107.0H1108.0H1109.0H1110.0H1111.0H1112.0H1113.0H1114.0H1115.0H1116.0H1117.0H1118.0H1119.0H1120.0H1121.0"/>
<path stroke="#2a8ee2" stroke-width="2.1" stroke-linejoin="round" d="M30.0 964.3H31.0V959.3H32.0V926.3H33.0V916.3H34.0V907.3H35.0V902.3H36.0V896.3H37.0V893.3H38.0V891.3H39.0V889.3H40.0V887.3H41.0V885.3H42.0V884.3H43.0V883.3H44.0V882.3H45.0V881.3H46.0V880.3H47.0V879.3H48.0V878.3H49.0V877.3H50.0V876.3H51.0V875.3H52.0V874.3H53.0V873.3H54.0V872.3H55.0V871.3H56.0V870.3H57.0H58.0V869.3H59.0V868.3H60.0V867.3H61.0V866.3H62.0V865.3H63.0H64.0V864.3H65.0V863.3H66.0V862.3H67.0V861.3H68.0V860.3H69.0H70.0V859.3H71.0V858.3H72.0V857.3H73.0H74.0V856.3H75.0V855.3H76.0H77.0V854.3H78.0V853.3H79.0V852.3H80.0H81.0V851.3H82.0V850.3H83.0H84.0V849.3H85.0V848.3H86.0H87.0V847.3H88.0V846.3H89.0H90.0V845.3H91.0H92.0V844.3H93.0V843.3H94.0H95.0V842.3H96.0H97.0V841.3H98.0V840.3H99.0H100.0V839.3H101.0H102.0V838.3H103.0V837.3H104.0H105.0V836.3H106.0H107.0V835.3H108.0H109.0V834.3H110.0V833.3H111.0H112.0V832.3H113.0H114.0V831.3H115.0H116.0V830.3H117.0H118.0V829.3H119.0V828.3H120.0H121.0V827.3H122.0H123.0H124.0V826.3H125.0H126.0V825.3H127.0H128.0V824.3H129.0H130.0H131.0V823.3H132.0H133.0V822.3H134.0H135.0V821.3H136.0H137.0H138.0V820.3H139.0H140.0V819.3H141.0H142.0H143.0V818.3H144.0H145.0H146.0V817.3H147.0H148.0V816.3H149.0H150.0H151.0V815.3H152.0H153.0H154.0V814.3H155.0H156.0V813.3H157.0H158.0H159.0V812.3H160.0H161.0H162.0V811.3H163.0H164.0H165.0V810.3H166.0H167.0H168.0V809.3H169.0H170.0H171.0V808.3H172.0H173.0H174.0V807.3H175.0H176.0H177.0V806.3H178.0H179.0H180.0H181.0H182.0V805.3H183.0H184.0H185.0H186.0V804.3H187.0H188.0H189.0H190.0V803.3H191.0H192.0H193.0H194.0V802.3H195.0H196.0H197.0H198.0H199.0V801.3H200.0H201.0H202.0H203.0V800.3H204.0H205.0H206.0H207.0H208.0V799.3H209.0H210.0H211.0H212.0H213.0V798.3H214.0H215.0H216.0H217.0H218.0H219.0V797.3H220.0H221.0H222.0H223.0H224.0H225.0V796.3H226.0H227.0H228.0H229.0H230.0H231.0V795.3H232.0H233.0H234.0H235.0H236.0H237.0V794.3H238.0H239.0H240.0H241.0H242.0H243.0H244.0V793.3H245.0H246.0H247.0H248.0H249.0H250.0H251.0V792.3H252.0H253.0H254.0H255.0H256.0H257.0H258.0H259.0H260.0V791.3H261.0H262.0H263.0H264.0H265.0H266.0H267.0H268.0H269.0V790.3H270.0H271.0H272.0H273.0H274.0H275.0H276.0H277.0H278.0H279.0V789.3H280.0H281.0H282.0H283.0H284.0H285.0H286.0H287.0H288.0H289.0H290.0H291.0V788.3H292.0H293.0H294.0H295.0H296.0H297.0H298.0H299.0H300.0H301.0H302.0H303.0H304.0H305.0V787.3H306.0H307.0H308.0H309.0H310.0H311.0H312.0H313.0H314.0H315.0H316.0H317.0H318.0H319.0H320.0H321.0H322.0V786.3H323.0H324.0H325.0H326.0H327.0H328.0H329.0H330.0H331.0H332.0H333.0H334.0H335.0H336.0H337.0H338.0H339.0H340.0V785.3H341.0H342.0H343.0H344.0H345.0H346.0H347.0H348.0H349.0H350.0H351.0H352.0H353.0H354.0H355.0H356.0H357.0H358.0H359.0H360.0H361.0H362.0H363.0V784.3H364.0H365.0H366.0H367.0H368.0H369.0H370.0H371.0H372.0H373.0H374.0H375.0H376.0H377.0H378.0H379.0H380.0H381.0H382.0H383.0H384.0H385.0H386.0H387.0H388.0H389.0H390.0H391.0H392.0H393.0V783.3H394.0H395.0H396.0H397.0H398.0H399.0H400.0H401.0H402.0H403.0H404.0H405.0H406.0H407.0H408.0H409.0H410.0H411.0H412.0H413.0H414.0H415.0H416.0H417.0H418.0H419.0H420.0H421.0H422.0H423.0H424.0H425.0H426.0H427.0H428.0H429.0H430.0H431.0H432.0H433.0H434.0H435.0H436.0H437.0H438.0V782.3H439.0H440.0H441.0H442.0H443.0H444.0H445.0H446.0H447.0H448.0H449.0H450.0H451.0H452.0H453.0H454.0H455.0H456.0H457.0H458.0H459.0H460.0H461.0H462.0H463.0H464.0H465.0H466.0H467.0H468.0H469.0H470.0H471.0H472.0H473.0H474.0H475.0H476.0H477.0H478.0H479.0H480.0H481.0H482.0H483.0H484.0H485.0H486.0H487.0H488.0H489.0H490.0H491.0H492.0H493.0H494.0H495.0H496.0H497.0H498.0H499.0H500.0H501.0H502.0H503.0H504.0H505.0H506.0H507.0H508.0H509.0H510.0H511.0H512.0H513.0V781.3H514.0H515.0H516.0H517.0H518.0H519.0H520.0H521.0H522.0H523.0H524.0V782.3H525.0H526.0H527.0H528.0H529.0V781.3H530.0H531.0H532.0H533.0H534.0H535.0H536.0H537.0H538.0H539.0H540.0H541.0H542.0H543.0H544.0H545.0H546.0H547.0H548.0H549.0H550.0H551.0H552.0H553.0H554.0H555.0H556.0H557.0H558.0H559.0H560.0H561.0H562.0H563.0H564.0H565.0H566.0H567.0H568.0H569.0H570.0H571.0H572.0H573.0H574.0H575.0H576.0H577.0H578.0H579.0H580.0H581.0H582.0H583.0H584.0H585.0H586.0H587.0H588.0H589.0H590.0H591.0H592.0H593.0H594.0H595.0H596.0H597.0H598.0H599.0H600.0H601.0H602.0H603.0H604.0H605.0H606.0H607.0H608.0H609.0H610.0H611.0H612.0H613.0H614.0H615.0H616.0H617.0H618.0H619.0H620.0H621.0H622.0H623.0H624.0H625.0H626.0H627.0H628.0H629.0H630.0H631.0H632.0H633.0H634.0H635.0H636.0H637.0H638.0H639.0H640.0H641.0H642.0H643.0H644.0H645.0H646.0H647.0H648.0H649.0H650.0H651.0H652.0H653.0H654.0H655.0H656.0H657.0H658.0H659.0H660.0H661.0H662.0H663.0H664.0H665.0H666.0H667.0H668.0H669.0H670.0H671.0H672.0H673.0H674.0H675.0H676.0H677.0H678.0H679.0H680.0H681.0H682.0H683.0H684.0H685.0H686.0H687.0H688.0H689.0H690.0H691.0H692.0H693.0H694.0H695.0H696.0H697.0H698.0H699.0H700.0H701.0H702.0H703.0H704.0H705.0H706.0H707.0H708.0H709.0H710.0H711.0H712.0H713.0H714.0H715.0H716.0H717.0H718.0H719.0H720.0H721.0H722.0H723.0H724.0H725.0H726.0H727.0H728.0H729.0H730.0H731.0H732.0H733.0H734.0H735.0H736.0H737.0H738.0H739.0H740.0H741.0H742.0H743.0H744.0H745.0H746.0H747.0H748.0H749.0H750.0H751.0H752.0H753.0H754.0H755.0H756.0H757.0H758.0H759.0H760.0H761.0H762.0H763.0H764.0H765.0H766.0H767.0H768.0H769.0H770.0H771.0H772.0H773.0H774.0H775.0H776.0H777.0H778.0H779.0H780.0H781.0H782.0H783.0H784.0H785.0H786.0H787.0H788.0H789.0H790.0H791.0H792.0H793.0H794.0H795.0H796.0H797.0H798.0H799.0H800.0H801.0H802.0H803.0H804.0H805.0H806.0H807.0H808.0H809.0H810.0H811.0H812.0H813.0H814.0H815.0H816.0H817.0H818.0H819.0H820.0H821.0H822.0H823.0H824.0H825.0H826.0H827.0H828.0H829.0H830.0H831.0H832.0H833.0H834.0H835.0H836.0H837.0H838.0H839.0H840.0H841.0H842.0H843.0H844.0H845.0H846.0H847.0H848.0H849.0H850.0H851.0H852.0H853.0H854.0H855.0H856.0H857.0H858.0H859.0H860.0H861.0H862.0H863.0H864.0H865.0H866.0H867.0H868.0H869.0H870.0H871.0H872.0H873.0H874.0H875.0H876.0H877.0H878.0H879.0H880.0H881.0H882.0H883.0H884.0H885.0H886.0H887.0H888.0H889.0H890.0H891.0H892.0H893.0H894.0H895.0H896.0H897.0H898.0H899.0H900.0H901.0H902.0H903.0H904.0H905.0H906.0H907.0H908.0H909.0H910.0H911.0H912.0H913.0H914.0H915.0H916.0H917.0H918.0H919.0H920.0H921.0H922.0H923.0H924.0H925.0H926.0H927.0H928.0H929.0H930.0H931.0H932.0H933.0H934.0H935.0H936.0H937.0H938.0H939.0H940.0H941.0H942.0H943.0H944.0H945.0H946.0H947.0H948.0H949.0H950.0H951.0H952.0H953.0H954.0H955.0H956.0H957.0H958.0H959.0H960.0H961.0H962.0H963.0H964.0H965.0H966.0H967.0H968.0H969.0H970.0H971.0H972.0H973.0H974.0H975.0H976.0H977.0H978.0H979.0H980.0H981.0H982.0H983.0H984.0H985.0H986.0H987.0H988.0H989.0H990.0H991.0H992.0H993.0H994.0H995.0H996.0H997.0H998.0H999.0H1000.0H1001.0H1002.0H1003.0H1004.0H1005.0H1006.0H1007.0H1008.0H1009.0H1010.0H1011.0H1012.0H1013.0H1014.0H1015.0H1016.0H1017.0H1018.0H1019.0H1020.0H1021.0H1022.0H1023.0H1024.0H1025.0H1026.0H1027.0H1028.0H1029.0H1030.0H1031.0H1032.0H1033.0H1034.0H1035.0H1036.0H1037.0H1038.0H1039.0H1040.0H1041.0H1042.0H1043.0H1044.0H1045.0H1046.0H1047.0H1048.0H1049.0H1050.0H1051.0H1052.0H1053.0H1054.0H1055.0H1056.0H1057.0H1058.0H1059.0H1060.0H1061.0H1062.0H1063.0H1064.0H1065.0H1066.0H1067.0H1068.0H1069.0H1070.0H1071.0H1072.0H1073.0H1074.0H1075.0H1076.0H1077.0H1078.0H1079.0H1080.0H1081.0H1082.0H1083.0H1084.0H1085.0H1086.0H1087.0H1088.0H1089.0H1090.0H1091.0H1092.0H1093.0H1094.0H1095.0H1096.0H1097.0H1098.0H1099.0H1100.0H1101.0H1102.0H1103.0H1104.0H1105.0H1106.0H1107.0H1108.0H1109.0H1110.0H1111.0H1112.0H1113.0H1114.0H1115.0H1116.0H1117.0H1118.0H1119.0H1120.0H1121.0"/>
</g>
<path d="M3 742.5H13.5V733.5H23.5" stroke="#f7e052" stroke-width="1.6" fill="none"/>
<text x="24.3" y="740.1" class="leg">idr</text>
<path d="M52.5 742.5H63.0V733.5H73.0" stroke="#2a8ee2" stroke-width="1.6" fill="none"/>
<text x="73.8" y="740.1" class="leg">iqr</text>
<text x="25.2" y="981.3" class="tk" text-anchor="end">-10</text>
<text x="25.2" y="932.3" class="tk" text-anchor="end">0</text>
<text x="25.2" y="883.3" class="tk" text-anchor="end">10</text>
<text x="25.2" y="834.3" class="tk" text-anchor="end">20</text>
<text x="25.2" y="785.3" class="tk" text-anchor="end">30</text>
<text x="30.0" y="999.8" class="tk" text-anchor="middle" letter-spacing="0.2">0</text>
<text x="121.0" y="999.8" class="tk" text-anchor="middle" letter-spacing="0.2">0.01</text>
<text x="211.0" y="999.8" class="tk" text-anchor="middle" letter-spacing="0.2">0.02</text>
<text x="302.0" y="999.8" class="tk" text-anchor="middle" letter-spacing="0.2">0.03</text>
<text x="393.0" y="999.8" class="tk" text-anchor="middle" letter-spacing="0.2">0.04</text>
<text x="484.0" y="999.8" class="tk" text-anchor="middle" letter-spacing="0.2">0.05</text>
<text x="574.0" y="999.8" class="tk" text-anchor="middle" letter-spacing="0.2">0.06</text>
<text x="665.0" y="999.8" class="tk" text-anchor="middle" letter-spacing="0.2">0.07</text>
<text x="756.0" y="999.8" class="tk" text-anchor="middle" letter-spacing="0.2">0.08</text>
<text x="846.0" y="999.8" class="tk" text-anchor="middle" letter-spacing="0.2">0.09</text>
<text x="937.0" y="999.8" class="tk" text-anchor="middle" letter-spacing="0.2">0.1</text>
<text x="1028.0" y="999.8" class="tk" text-anchor="middle" letter-spacing="0.2">0.11</text>
<text x="1118.0" y="999.8" class="tk" text-anchor="middle" letter-spacing="0.2">0.12</text>
</svg>
<div id="status">
<span class="ko" style="left:4.41px;top:4.48px;width:23.67px;height:13.84px;line-height:13.84px;font-size:13px;color:#1c1c1c">준비</span>
<span class="ko" style="left:973.80px;top:4.57px;width:50.55px;height:13.45px;line-height:13.45px;font-size:12.6px;color:#1c1c1c">샘플 기반</span>
<span class="ko" style="left:1030.70px;top:4.45px;width:50.90px;height:13.69px;line-height:13.69px;font-size:12.8px;color:#1c1c1c">오프셋=0</span>
<span class="ko" style="left:1087.10px;top:5.95px;width:51.60px;height:10.90px;line-height:10.90px;font-size:11.6px;color:#1c1c1c">T=0.1256</span>
</div>
</body></html>
